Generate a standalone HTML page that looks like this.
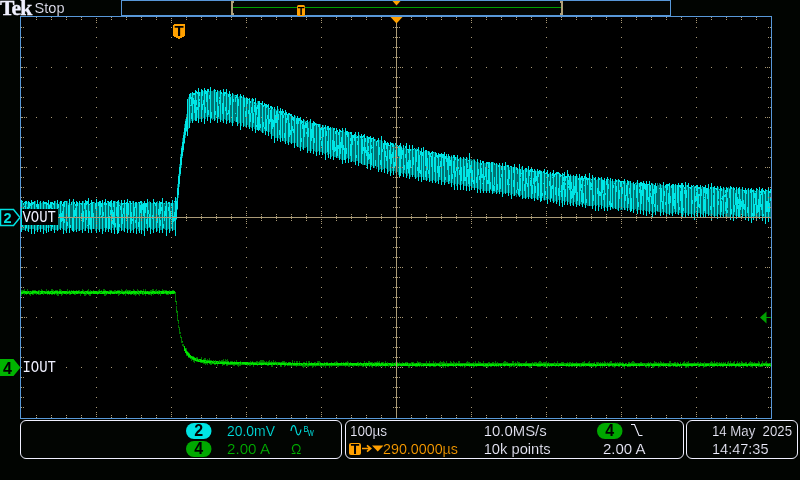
<!DOCTYPE html>
<html><head><meta charset="utf-8"><title>Tek</title>
<style>
html,body{margin:0;padding:0;background:#010401;width:800px;height:480px;overflow:hidden}
svg{display:block;position:absolute;left:0;top:0;will-change:transform}
text{font-family:"Liberation Sans",sans-serif;font-size:15.500px;fill:#f0f0ff}
.t{stroke:#020502;stroke-width:0.2px}
.m{font-family:"Liberation Mono",monospace}
</style></head><body>
<svg width="800" height="480" viewBox="0 0 800 480">
<rect x="0" y="0" width="800" height="480" fill="#010401"/>
<rect x="21" y="17" width="750" height="401" fill="#000"/>
<g shape-rendering="crispEdges" fill="none" stroke-width="1">
<path stroke="#007474" d="M21.5 202V228M22.5 201V230M23.5 203V230M24.5 202V230M25.5 202V230M26.5 201V229M27.5 202V231M28.5 203V230M29.5 202V229M30.5 203V229M31.5 202V229M32.5 202V229M33.5 202V229M34.5 201V229M35.5 201V231M36.5 204V230M37.5 202V228M38.5 204V230M39.5 202V229M40.5 202V229M41.5 203V229M42.5 202V229M43.5 203V229M44.5 202V230M45.5 202V231M46.5 204V230M47.5 203V228M48.5 201V231M49.5 204V228M50.5 202V231M51.5 204V229M52.5 202V229M53.5 203V230M54.5 203V230M55.5 201V230M56.5 203V230M57.5 202V230M58.5 204V230M59.5 202V229M60.5 202V228M61.5 201V228M62.5 204V229M63.5 202V228M64.5 201V230M65.5 201V231M66.5 203V229M67.5 201V229M68.5 203V228M69.5 202V229M70.5 204V228M71.5 202V230M72.5 201V229M73.5 201V230M74.5 202V231M75.5 204V230M76.5 203V229M77.5 202V229M78.5 203V231M79.5 203V228M80.5 203V230M81.5 203V230M82.5 202V229M83.5 201V229M84.5 203V231M85.5 202V230M86.5 201V228M87.5 201V229M88.5 202V228M89.5 204V229M90.5 203V230M91.5 203V229M92.5 202V229M93.5 202V229M94.5 202V229M95.5 203V231M96.5 201V231M97.5 202V229M98.5 202V230M99.5 201V231M100.5 201V229M101.5 203V229M102.5 201V231M103.5 203V231M104.5 202V228M105.5 201V228M106.5 203V230M107.5 201V229M108.5 201V229M109.5 202V229M110.5 201V230M111.5 202V230M112.5 203V228M113.5 201V230M114.5 202V230M115.5 201V228M116.5 202V230M117.5 201V231M118.5 202V228M119.5 202V231M120.5 203V228M121.5 204V228M122.5 203V230M123.5 203V231M124.5 203V230M125.5 203V228M126.5 202V229M127.5 202V229M128.5 203V230M129.5 201V229M130.5 202V229M131.5 203V231M132.5 201V230M133.5 201V229M134.5 203V229M135.5 202V228M136.5 202V229M137.5 203V229M138.5 202V231M139.5 202V229M140.5 201V230M141.5 203V231M142.5 202V230M143.5 203V231M144.5 202V228M145.5 203V228M146.5 203V229M147.5 202V229M148.5 202V228M149.5 201V228M150.5 203V228M151.5 203V229M152.5 203V230M153.5 201V231M154.5 202V229M155.5 203V228M156.5 203V228M157.5 201V231M158.5 203V228M159.5 203V229M160.5 202V230M161.5 202V230M162.5 201V231M163.5 203V229M164.5 203V229M165.5 201V230M166.5 203V231M167.5 203V230M168.5 202V229M169.5 204V229M170.5 203V231M171.5 203V229M172.5 203V230M173.5 203V230M174.5 201V230M175.5 200V228M176.5 198V220M177.5 184V210M178.5 174V198M179.5 164V187M180.5 154V176M181.5 146V168M182.5 138V158M183.5 132V152M184.5 124V144M185.5 119V138M186.5 114V132M187.5 102V132M188.5 97V129M189.5 98V126M190.5 93V123M191.5 93V121M192.5 93V121M193.5 93V121M194.5 93V120M195.5 91V119M196.5 91V119M197.5 92V118M198.5 92V118M199.5 92V119M200.5 92V119M201.5 92V119M202.5 90V119M203.5 91V118M204.5 91V119M205.5 90V119M206.5 91V117M207.5 91V118M208.5 89V117M209.5 91V117M210.5 92V118M211.5 91V119M212.5 91V120M213.5 90V119M214.5 92V118M215.5 90V120M216.5 92V118M217.5 92V120M218.5 91V119M219.5 91V119M220.5 91V118M221.5 92V120M222.5 93V121M223.5 93V119M224.5 92V119M225.5 92V120M226.5 93V120M227.5 93V121M228.5 94V120M229.5 95V123M230.5 94V122M231.5 96V123M232.5 94V122M233.5 94V123M234.5 95V121M235.5 95V122M236.5 95V122M237.5 95V124M238.5 97V124M239.5 96V123M240.5 98V125M241.5 96V126M242.5 97V123M243.5 99V126M244.5 97V126M245.5 98V127M246.5 99V125M247.5 98V125M248.5 99V127M249.5 98V128M250.5 101V127M251.5 99V128M252.5 100V128M253.5 99V127M254.5 102V129M255.5 100V127M256.5 103V130M257.5 101V130M258.5 103V128M259.5 101V129M260.5 103V131M261.5 103V132M262.5 104V130M263.5 105V133M264.5 103V131M265.5 104V131M266.5 104V131M267.5 105V132M268.5 105V133M269.5 108V132M270.5 106V134M271.5 106V133M272.5 107V136M273.5 109V136M274.5 107V137M275.5 109V138M276.5 110V138M277.5 108V138M278.5 109V138M279.5 111V139M280.5 109V137M281.5 111V138M282.5 113V138M283.5 111V141M284.5 113V142M285.5 114V140M286.5 112V141M287.5 114V143M288.5 115V142M289.5 113V142M290.5 114V143M291.5 116V143M292.5 116V143M293.5 117V143M294.5 116V146M295.5 116V143M296.5 118V146M297.5 117V145M298.5 118V147M299.5 118V148M300.5 118V148M301.5 120V147M302.5 121V149M303.5 120V147M304.5 120V148M305.5 121V148M306.5 121V147M307.5 122V150M308.5 122V151M309.5 121V151M310.5 121V149M311.5 123V151M312.5 123V149M313.5 124V152M314.5 122V151M315.5 123V152M316.5 123V151M317.5 124V152M318.5 124V151M319.5 126V152M320.5 124V152M321.5 127V152M322.5 127V153M323.5 125V153M324.5 127V154M325.5 126V156M326.5 127V153M327.5 126V155M328.5 126V156M329.5 128V154M330.5 127V156M331.5 128V157M332.5 127V156M333.5 128V158M334.5 128V157M335.5 131V157M336.5 131V156M337.5 130V158M338.5 132V158M339.5 130V159M340.5 130V159M341.5 131V160M342.5 130V159M343.5 130V160M344.5 132V158M345.5 131V160M346.5 131V159M347.5 131V158M348.5 132V161M349.5 132V159M350.5 132V162M351.5 132V162M352.5 135V161M353.5 135V162M354.5 134V162M355.5 134V161M356.5 135V161M357.5 136V161M358.5 135V163M359.5 135V163M360.5 136V163M361.5 137V162M362.5 136V165M363.5 135V165M364.5 136V164M365.5 138V165M366.5 136V166M367.5 139V165M368.5 137V164M369.5 137V164M370.5 137V165M371.5 138V167M372.5 138V166M373.5 139V166M374.5 139V168M375.5 139V166M376.5 141V169M377.5 140V167M378.5 140V169M379.5 140V170M380.5 140V169M381.5 140V168M382.5 141V170M383.5 143V169M384.5 143V170M385.5 141V168M386.5 143V169M387.5 144V171M388.5 143V172M389.5 145V171M390.5 145V172M391.5 143V173M392.5 143V171M393.5 143V172M394.5 145V171M395.5 143V173M396.5 145V172M397.5 145V172M398.5 146V175M399.5 147V173M400.5 145V172M401.5 146V173M402.5 148V174M403.5 148V173M404.5 148V173M405.5 146V174M406.5 147V176M407.5 149V176M408.5 149V174M409.5 147V176M410.5 149V177M411.5 149V175M412.5 147V175M413.5 149V175M414.5 148V177M415.5 151V175M416.5 148V178M417.5 149V177M418.5 151V178M419.5 150V177M420.5 151V177M421.5 149V179M422.5 152V177M423.5 152V179M424.5 151V180M425.5 150V180M426.5 151V179M427.5 151V180M428.5 151V178M429.5 151V179M430.5 153V181M431.5 152V181M432.5 152V179M433.5 152V180M434.5 152V181M435.5 152V180M436.5 153V182M437.5 155V181M438.5 153V182M439.5 154V180M440.5 154V180M441.5 153V181M442.5 154V182M443.5 154V182M444.5 155V182M445.5 156V183M446.5 154V182M447.5 156V182M448.5 156V182M449.5 156V184M450.5 157V183M451.5 155V184M452.5 157V183M453.5 155V185M454.5 156V183M455.5 157V184M456.5 157V186M457.5 156V184M458.5 159V184M459.5 158V185M460.5 158V186M461.5 158V185M462.5 159V184M463.5 157V185M464.5 158V186M465.5 159V186M466.5 159V187M467.5 158V186M468.5 160V187M469.5 159V188M470.5 159V186M471.5 159V187M472.5 160V188M473.5 159V188M474.5 159V189M475.5 161V188M476.5 162V188M477.5 162V188M478.5 162V189M479.5 163V190M480.5 162V190M481.5 163V189M482.5 161V191M483.5 162V189M484.5 163V191M485.5 163V191M486.5 163V191M487.5 162V191M488.5 162V191M489.5 162V192M490.5 163V190M491.5 162V191M492.5 164V190M493.5 162V193M494.5 163V193M495.5 164V192M496.5 165V191M497.5 164V193M498.5 165V192M499.5 165V193M500.5 165V192M501.5 166V192M502.5 166V192M503.5 166V194M504.5 166V193M505.5 165V192M506.5 165V193M507.5 165V193M508.5 167V194M509.5 167V193M510.5 166V195M511.5 167V194M512.5 167V194M513.5 167V196M514.5 167V193M515.5 167V195M516.5 167V197M517.5 168V194M518.5 169V196M519.5 169V194M520.5 169V196M521.5 167V195M522.5 168V197M523.5 170V198M524.5 169V198M525.5 170V195M526.5 168V198M527.5 169V197M528.5 171V197M529.5 170V197M530.5 169V198M531.5 168V198M532.5 169V199M533.5 171V198M534.5 171V199M535.5 170V198M536.5 171V199M537.5 170V198M538.5 171V200M539.5 170V198M540.5 170V197M541.5 171V200M542.5 172V198M543.5 171V200M544.5 171V201M545.5 173V200M546.5 172V200M547.5 171V201M548.5 174V199M549.5 173V200M550.5 172V199M551.5 174V199M552.5 173V201M553.5 172V199M554.5 174V202M555.5 173V201M556.5 174V201M557.5 172V202M558.5 172V200M559.5 173V202M560.5 174V200M561.5 175V203M562.5 173V202M563.5 174V201M564.5 173V202M565.5 176V202M566.5 176V201M567.5 174V204M568.5 174V202M569.5 176V204M570.5 174V202M571.5 176V203M572.5 176V205M573.5 176V202M574.5 176V202M575.5 176V204M576.5 177V202M577.5 176V205M578.5 178V205M579.5 178V205M580.5 177V204M581.5 176V205M582.5 177V205M583.5 178V204M584.5 176V205M585.5 178V204M586.5 177V205M587.5 178V206M588.5 178V206M589.5 176V205M590.5 178V206M591.5 179V206M592.5 178V205M593.5 177V206M594.5 178V205M595.5 178V204M596.5 180V206M597.5 179V205M598.5 179V206M599.5 178V207M600.5 178V205M601.5 180V206M602.5 179V206M603.5 180V208M604.5 179V208M605.5 181V207M606.5 179V208M607.5 179V208M608.5 179V207M609.5 180V207M610.5 181V208M611.5 181V207M612.5 180V209M613.5 181V209M614.5 181V208M615.5 181V207M616.5 180V209M617.5 180V210M618.5 182V210M619.5 180V208M620.5 181V210M621.5 183V210M622.5 181V210M623.5 181V208M624.5 182V209M625.5 181V210M626.5 183V208M627.5 182V211M628.5 181V208M629.5 181V210M630.5 182V210M631.5 183V209M632.5 183V209M633.5 184V209M634.5 184V210M635.5 183V209M636.5 182V211M637.5 183V209M638.5 183V210M639.5 183V210M640.5 182V210M641.5 182V210M642.5 183V211M643.5 185V210M644.5 183V210M645.5 184V211M646.5 185V210M647.5 184V211M648.5 184V212M649.5 185V212M650.5 185V211M651.5 183V212M652.5 183V211M653.5 184V213M654.5 185V212M655.5 185V210M656.5 186V211M657.5 183V212M658.5 185V212M659.5 183V212M660.5 184V213M661.5 185V213M662.5 185V212M663.5 185V211M664.5 186V212M665.5 185V213M666.5 185V214M667.5 184V214M668.5 184V214M669.5 186V213M670.5 186V213M671.5 185V214M672.5 185V213M673.5 184V213M674.5 185V212M675.5 186V214M676.5 185V212M677.5 185V214M678.5 187V213M679.5 185V213M680.5 185V213M681.5 187V214M682.5 187V214M683.5 185V215M684.5 187V213M685.5 185V212M686.5 185V213M687.5 185V215M688.5 188V212M689.5 187V214M690.5 187V214M691.5 187V213M692.5 186V214M693.5 185V215M694.5 186V214M695.5 186V213M696.5 185V215M697.5 187V214M698.5 187V213M699.5 187V213M700.5 186V214M701.5 187V214M702.5 186V215M703.5 188V214M704.5 187V213M705.5 186V216M706.5 188V214M707.5 188V214M708.5 186V214M709.5 189V215M710.5 187V216M711.5 186V213M712.5 187V215M713.5 187V216M714.5 187V216M715.5 188V216M716.5 188V216M717.5 189V216M718.5 187V214M719.5 189V215M720.5 188V214M721.5 188V215M722.5 189V216M723.5 187V217M724.5 188V214M725.5 190V217M726.5 188V214M727.5 188V217M728.5 187V217M729.5 188V217M730.5 190V216M731.5 187V215M732.5 188V217M733.5 189V215M734.5 188V215M735.5 190V216M736.5 189V216M737.5 189V216M738.5 188V216M739.5 190V217M740.5 189V217M741.5 189V215M742.5 189V218M743.5 190V216M744.5 190V216M745.5 189V215M746.5 190V217M747.5 189V216M748.5 190V217M749.5 190V217M750.5 189V217M751.5 189V219M752.5 190V218M753.5 189V217M754.5 190V218M755.5 191V217M756.5 190V217M757.5 189V218M758.5 190V217M759.5 190V216M760.5 191V216M761.5 189V216M762.5 191V216M763.5 190V217M764.5 191V218M765.5 189V216M766.5 190V217M767.5 190V217M768.5 189V218M769.5 191V217M770.5 189V219"/>
<path stroke="#00e6e6" d="M21.5 200V232M22.5 224V227M22.5 201V202M22.5 218V219M23.5 203V205M23.5 216V225M23.5 207V209M24.5 202V203M24.5 206V207M25.5 201V231M26.5 222V228M26.5 201V204M27.5 207V211M27.5 210V218M28.5 201V232M29.5 202V208M29.5 214V223M30.5 203V206M31.5 200V234M32.5 217V222M32.5 202V205M33.5 202V204M33.5 213V220M34.5 201V234M36.5 215V220M36.5 204V207M36.5 206V207M37.5 200V232M38.5 212V216M38.5 204V210M38.5 208V217M38.5 224V226M40.5 201V232M41.5 209V214M42.5 220V225M43.5 201V234M44.5 202V204M45.5 202V204M45.5 210V219M46.5 202V233M47.5 203V205M48.5 200V232M49.5 205V210M50.5 223V226M50.5 202V208M51.5 202V231M52.5 208V213M52.5 202V204M52.5 214V227M53.5 203V205M53.5 215V216M54.5 201V233M55.5 211V216M55.5 209V210M57.5 200V231M58.5 204V208M59.5 214V218M60.5 201V230M61.5 201V204M61.5 213V222M62.5 211V216M62.5 204V206M62.5 211V221M62.5 212V214M63.5 202V234M64.5 219V223M64.5 201V207M65.5 201V202M66.5 201V233M67.5 222V226M68.5 205V218M69.5 199V233M70.5 225V228M71.5 202V205M72.5 218V231M73.5 199V232M74.5 202V204M74.5 210V218M75.5 204V206M75.5 208V216M76.5 201V232M77.5 202V206M79.5 201V231M80.5 203V204M81.5 213V218M81.5 203V205M82.5 201V233M83.5 211V222M84.5 203V209M85.5 200V231M86.5 201V205M86.5 210V220M87.5 201V204M87.5 225V226M88.5 198V233M89.5 204V205M89.5 211V224M89.5 223V225M90.5 203V204M90.5 218V229M91.5 200V233M92.5 205V211M92.5 202V208M92.5 208V218M93.5 224V228M93.5 202V203M93.5 213V224M93.5 227V229M95.5 203V209M96.5 199V233M98.5 202V206M99.5 201V232M100.5 210V213M100.5 201V205M100.5 203V215M101.5 203V207M101.5 216V217M102.5 200V234M103.5 212V216M104.5 202V205M105.5 199V232M106.5 203V205M106.5 217V228M107.5 201V202M108.5 201V232M109.5 216V222M109.5 202V206M109.5 218V229M110.5 210V215M110.5 201V207M111.5 200V233M112.5 220V224M112.5 210V219M113.5 201V207M113.5 212V225M113.5 205V206M114.5 201V234M115.5 223V227M116.5 202V203M116.5 207V216M117.5 201V234M118.5 200V233M119.5 224V227M119.5 205V206M120.5 206V210M121.5 200V231M122.5 203V205M122.5 214V224M123.5 208V214M123.5 203V204M124.5 200V232M125.5 203V204M126.5 211V216M126.5 202V206M126.5 204V214M127.5 199V233M128.5 203V207M128.5 207V215M129.5 201V202M130.5 201V233M131.5 212V218M131.5 203V204M131.5 212V224M132.5 219V221M133.5 201V233M134.5 211V214M134.5 207V216M135.5 220V223M135.5 202V208M136.5 202V234M138.5 222V227M138.5 202V203M139.5 202V233M140.5 205V209M140.5 201V203M140.5 205V213M141.5 201V234M142.5 204V210M143.5 203V206M143.5 206V216M144.5 201V236M145.5 207V213M145.5 203V207M146.5 221V224M146.5 203V207M146.5 219V221M147.5 199V231M148.5 210V214M149.5 217V223M149.5 214V227M150.5 202V234M152.5 215V219M153.5 199V233M154.5 202V204M155.5 203V206M156.5 202V232M157.5 218V223M158.5 209V215M159.5 201V233M160.5 220V226M160.5 202V208M160.5 203V214M161.5 207V211M161.5 202V204M162.5 198V233M163.5 224V228M164.5 203V204M164.5 211V221M165.5 206V216M166.5 201V236M168.5 207V211M168.5 202V204M169.5 202V233M170.5 211V219M171.5 203V206M172.5 200V231M173.5 216V222M174.5 201V202M174.5 212V221M175.5 197V236M176.5 201V219M177.5 188V209M178.5 176V195M179.5 167V184M180.5 157V174M181.5 148V165M182.5 142V156M183.5 135V150M184.5 128V143M185.5 121V135M186.5 117V131M187.5 99V136M189.5 94V128M190.5 93V99M190.5 105V106M191.5 113V119M191.5 97V106M192.5 92V123M193.5 98V104M193.5 93V95M194.5 93V95M194.5 100V113M195.5 90V121M196.5 100V105M196.5 91V93M196.5 107V121M197.5 107V110M197.5 92V94M198.5 88V123M199.5 102V107M199.5 92V96M199.5 99V101M201.5 89V122M202.5 104V110M202.5 90V96M203.5 100V105M204.5 88V124M205.5 107V113M205.5 90V94M206.5 97V102M206.5 91V97M207.5 89V121M208.5 110V115M208.5 89V92M209.5 95V99M210.5 87V123M211.5 112V118M214.5 89V121M215.5 111V115M215.5 90V91M216.5 92V93M216.5 93V102M217.5 90V123M218.5 106V117M219.5 100V104M219.5 97V99M220.5 90V122M221.5 92V94M222.5 103V108M222.5 103V114M222.5 109V111M223.5 89V123M224.5 92V96M225.5 107V111M225.5 92V94M226.5 89V124M227.5 113V115M228.5 110V114M228.5 94V97M229.5 91V123M230.5 94V96M230.5 97V105M232.5 93V126M233.5 99V102M235.5 97V102M235.5 95V96M235.5 113V114M236.5 117V122M236.5 95V98M237.5 94V126M238.5 100V106M238.5 99V100M240.5 94V130M241.5 96V98M243.5 95V127M244.5 98V107M245.5 111V117M246.5 98V127M247.5 98V104M248.5 110V114M248.5 99V100M249.5 98V129M250.5 101V103M250.5 113V122M251.5 107V113M252.5 98V131M253.5 99V101M253.5 113V123M254.5 105V112M254.5 102V104M255.5 98V133M256.5 107V115M256.5 125V127M257.5 105V109M257.5 117V130M257.5 117V118M258.5 101V131M259.5 101V130M260.5 124V128M260.5 103V104M261.5 103V105M262.5 101V133M263.5 122V127M263.5 105V107M264.5 103V106M264.5 127V129M265.5 104V135M266.5 121V125M266.5 104V108M266.5 119V131M267.5 115V119M267.5 105V107M268.5 104V136M269.5 119V124M269.5 108V109M270.5 119V122M270.5 106V108M270.5 110V121M271.5 106V139M272.5 107V109M272.5 119V129M273.5 122V127M273.5 120V122M274.5 107V143M275.5 115V123M276.5 111V123M277.5 106V141M278.5 114V120M279.5 130V135M279.5 111V113M280.5 108V142M281.5 111V115M282.5 109V141M283.5 115V118M283.5 111V113M284.5 133V138M284.5 113V115M285.5 110V144M286.5 118V123M286.5 112V115M287.5 114V120M288.5 113V145M289.5 123V126M289.5 113V115M289.5 124V137M290.5 130V135M290.5 114V116M291.5 114V144M292.5 126V131M292.5 116V120M293.5 129V133M293.5 117V121M294.5 115V148M296.5 118V124M297.5 116V147M298.5 118V124M299.5 118V121M300.5 117V151M301.5 138V142M301.5 120V124M302.5 124V129M302.5 121V123M303.5 119V150M304.5 125V137M305.5 122V128M306.5 123V128M306.5 121V122M306.5 132V134M307.5 120V153M308.5 128V137M308.5 131V132M310.5 119V153M311.5 129V141M312.5 123V129M312.5 126V138M313.5 121V154M314.5 138V143M314.5 122V126M315.5 123V125M316.5 124V156M317.5 124V125M318.5 124V127M319.5 124V155M320.5 134V140M320.5 128V137M321.5 141V146M321.5 127V130M322.5 125V155M323.5 133V137M323.5 128V137M324.5 127V129M325.5 125V160M326.5 131V136M327.5 126V130M327.5 141V152M328.5 126V158M329.5 128V130M330.5 127V159M332.5 140V150M333.5 128V160M334.5 128V130M334.5 141V152M335.5 147V151M335.5 131V134M336.5 128V158M337.5 130V132M337.5 145V156M337.5 148V150M338.5 145V149M338.5 132V135M339.5 129V160M340.5 130V132M340.5 142V154M341.5 142V148M341.5 131V132M341.5 137V145M342.5 128V164M343.5 145V150M344.5 148V160M345.5 128V163M346.5 148V154M346.5 131V135M347.5 131V137M348.5 132V163M350.5 138V141M350.5 132V134M350.5 144V156M351.5 132V162M352.5 135V137M352.5 135V145M353.5 135V138M354.5 137V141M354.5 134V140M354.5 137V139M355.5 132V165M356.5 155V158M356.5 137V138M357.5 141V145M357.5 136V138M358.5 132V166M360.5 136V138M361.5 134V164M362.5 150V154M362.5 136V138M362.5 139V152M363.5 147V151M363.5 135V137M364.5 134V165M365.5 147V153M365.5 138V142M366.5 150V156M367.5 136V169M368.5 146V151M368.5 137V143M368.5 152V160M369.5 154V159M369.5 137V139M370.5 136V170M371.5 145V149M371.5 138V142M371.5 153V165M372.5 138V139M372.5 147V148M373.5 137V168M374.5 139V141M375.5 160V166M376.5 141V146M376.5 141V145M377.5 140V142M378.5 138V172M379.5 147V155M380.5 160V165M381.5 136V172M382.5 149V152M383.5 143V149M384.5 140V173M385.5 151V157M385.5 141V145M386.5 156V161M386.5 143V149M387.5 142V174M388.5 143V146M389.5 145V146M389.5 150V159M390.5 142V176M391.5 158V164M391.5 143V145M391.5 154V162M392.5 152V158M392.5 143V147M393.5 144V175M394.5 162V167M395.5 150V155M395.5 143V145M395.5 154V166M396.5 143V173M397.5 145V146M398.5 148V153M398.5 146V148M398.5 146V156M399.5 145V177M400.5 143V176M401.5 147V159M402.5 150V155M403.5 145V177M404.5 165V170M405.5 154V158M405.5 146V148M406.5 143V178M407.5 162V169M407.5 149V150M408.5 149V153M408.5 160V173M409.5 145V179M410.5 149V151M410.5 160V168M412.5 145V177M413.5 149V150M413.5 157V165M414.5 148V149M415.5 149V179M416.5 158V161M416.5 150V162M417.5 167V171M417.5 149V151M418.5 147V181M419.5 155V160M419.5 160V173M420.5 170V174M420.5 151V155M421.5 148V182M422.5 152V156M423.5 147V180M425.5 171V177M425.5 150V154M425.5 154V166M426.5 150V181M427.5 158V170M428.5 170V174M428.5 151V155M429.5 152V182M430.5 153V157M431.5 152V154M431.5 156V167M432.5 151V183M433.5 152V153M434.5 165V171M434.5 157V169M434.5 170V172M435.5 152V183M436.5 153V157M437.5 155V158M437.5 166V173M438.5 153V184M439.5 154V157M439.5 166V177M439.5 172V174M440.5 161V167M440.5 154V157M441.5 153V185M442.5 154V158M443.5 160V164M443.5 154V156M443.5 156V166M444.5 152V185M445.5 177V180M445.5 156V159M446.5 157V162M446.5 154V158M447.5 158V162M447.5 158V170M448.5 154V184M449.5 175V181M449.5 156V162M449.5 158V166M450.5 160V166M451.5 156V187M452.5 174V179M453.5 163V169M453.5 155V158M453.5 161V173M454.5 155V190M455.5 171V177M455.5 157V160M456.5 168V171M457.5 155V190M458.5 159V161M458.5 167V169M459.5 170V175M460.5 157V190M461.5 167V173M461.5 170V181M463.5 157V190M464.5 166V169M464.5 168V181M465.5 177V181M465.5 159V160M466.5 157V191M467.5 163V168M467.5 169V177M468.5 181V184M468.5 160V161M468.5 169V181M469.5 153V191M470.5 165V173M471.5 161V190M472.5 170V182M473.5 180V184M474.5 160V190M476.5 177V183M477.5 159V193M478.5 169V175M479.5 176V180M480.5 160V193M481.5 173V178M481.5 163V165M481.5 168V178M481.5 172V174M482.5 174V178M482.5 161V163M482.5 183V184M483.5 161V193M484.5 176V180M485.5 172V176M485.5 167V177M486.5 162V193M487.5 180V184M487.5 162V164M488.5 169V174M488.5 162V168M488.5 174V184M489.5 162V193M490.5 182V187M490.5 187V189M491.5 167V172M491.5 162V168M492.5 162V194M493.5 185V191M494.5 186V191M494.5 163V165M494.5 177V185M496.5 163V194M497.5 184V188M497.5 188V190M498.5 165V167M499.5 163V194M500.5 181V186M500.5 178V189M501.5 174V177M501.5 166V170M502.5 163V197M504.5 166V170M505.5 162V194M507.5 179V185M507.5 165V167M508.5 165V196M509.5 170V179M509.5 184V185M510.5 166V167M511.5 166V199M513.5 167V173M513.5 180V187M514.5 164V196M516.5 190V193M516.5 167V170M517.5 169V174M517.5 168V170M517.5 182V190M518.5 189V195M519.5 164V197M520.5 172V177M520.5 169V175M520.5 178V191M521.5 173V174M522.5 166V199M523.5 175V181M523.5 170V173M523.5 173V180M524.5 184V191M525.5 168V199M526.5 178V184M526.5 168V172M526.5 179V181M527.5 183V187M527.5 185V186M528.5 166V199M529.5 170V176M530.5 180V186M530.5 169V172M530.5 178V179M531.5 168V199M532.5 185V189M532.5 169V172M532.5 185V194M533.5 178V184M533.5 171V172M534.5 169V201M535.5 187V193M535.5 171V182M535.5 186V187M536.5 176V181M537.5 169V200M538.5 191V196M538.5 171V177M538.5 183V195M539.5 170V174M540.5 171V202M541.5 171V201M542.5 193V196M542.5 195V196M543.5 171V173M543.5 183V184M544.5 169V200M545.5 191V195M545.5 173V174M546.5 172V174M547.5 170V204M548.5 174V177M549.5 181V186M550.5 172V202M551.5 186V190M551.5 187V198M552.5 185V189M552.5 173V176M552.5 177V178M553.5 170V203M554.5 174V177M555.5 173V175M555.5 187V195M556.5 172V204M557.5 172V174M558.5 172V174M558.5 188V196M559.5 173V206M560.5 174V177M560.5 191V192M561.5 175V176M561.5 185V197M562.5 173V207M563.5 177V181M563.5 174V175M563.5 182V190M564.5 172V205M565.5 178V181M565.5 176V180M565.5 189V197M565.5 183V185M566.5 176V178M567.5 170V205M568.5 180V185M568.5 174V177M568.5 186V188M569.5 176V182M569.5 179V190M570.5 175V206M571.5 182V189M571.5 191V199M572.5 189V198M573.5 175V206M574.5 186V191M574.5 186V195M575.5 189V193M575.5 176V179M575.5 178V189M576.5 174V207M577.5 192V201M577.5 200V201M578.5 178V180M579.5 174V206M580.5 178V191M581.5 184V188M581.5 176V180M581.5 190V202M581.5 195V196M582.5 176V207M583.5 178V181M583.5 193V203M584.5 176V179M584.5 185V186M585.5 174V208M586.5 199V203M586.5 177V180M587.5 179V185M587.5 178V184M588.5 178V180M589.5 173V206M590.5 182V190M591.5 183V187M591.5 179V180M591.5 188V190M592.5 175V209M593.5 195V201M594.5 178V180M595.5 177V211M597.5 188V194M598.5 177V211M599.5 191V196M599.5 178V180M600.5 192V196M601.5 177V209M602.5 189V193M602.5 180V189M603.5 194V200M603.5 180V181M603.5 181V190M604.5 178V211M605.5 193V195M606.5 179V185M607.5 177V211M608.5 184V189M608.5 179V180M609.5 201V205M610.5 178V210M611.5 203V207M612.5 179V208M613.5 185V188M614.5 183V184M615.5 179V209M616.5 186V192M616.5 180V182M618.5 179V211M619.5 190V194M619.5 180V182M619.5 190V199M620.5 181V187M621.5 181V209M622.5 181V182M622.5 187V194M623.5 181V184M624.5 179V210M625.5 195V201M626.5 191V195M626.5 185V196M627.5 180V211M628.5 198V204M628.5 181V185M629.5 188V194M630.5 181V212M631.5 201V206M631.5 198V211M633.5 182V213M634.5 184V190M634.5 188V190M635.5 183V184M636.5 185V190M636.5 186V198M637.5 180V214M638.5 202V207M639.5 189V193M639.5 183V187M640.5 182V214M641.5 200V204M641.5 182V186M641.5 190V202M642.5 192V196M642.5 183V187M642.5 186V194M643.5 181V215M644.5 183V189M645.5 184V190M646.5 181V216M647.5 194V200M647.5 184V186M647.5 186V199M648.5 197V202M648.5 184V185M649.5 181V214M650.5 193V197M650.5 185V191M651.5 183V185M651.5 196V204M652.5 184V218M653.5 189V195M653.5 192V204M654.5 204V207M654.5 185V186M654.5 186V194M655.5 183V215M656.5 187V193M656.5 186V188M657.5 205V211M659.5 188V189M660.5 184V216M661.5 188V194M661.5 191V202M662.5 203V209M662.5 201V209M663.5 182V215M664.5 191V196M665.5 202V205M665.5 185V188M666.5 184V216M667.5 184V190M668.5 199V203M668.5 184V186M668.5 193V204M669.5 183V215M670.5 196V203M671.5 185V188M672.5 184V216M673.5 199V206M673.5 184V188M673.5 188V200M673.5 192V194M674.5 193V199M674.5 200V209M675.5 184V214M677.5 185V191M677.5 191V203M678.5 183V215M679.5 207V210M679.5 185V187M680.5 185V188M680.5 191V201M681.5 183V218M682.5 183V217M683.5 208V211M683.5 185V187M684.5 190V194M684.5 187V189M685.5 182V218M686.5 190V198M687.5 185V187M688.5 183V216M689.5 187V188M690.5 187V189M691.5 185V217M692.5 200V204M692.5 186V187M693.5 185V186M694.5 187V220M695.5 196V202M695.5 186V188M696.5 185V191M696.5 192V201M697.5 185V217M698.5 194V199M698.5 187V189M698.5 195V207M699.5 204V208M699.5 187V189M699.5 194V196M700.5 185V217M701.5 193V196M701.5 189V196M702.5 186V187M703.5 187V217M704.5 187V193M704.5 199V211M704.5 197V198M705.5 185V218M706.5 190V194M706.5 188V192M707.5 188V191M707.5 191V199M708.5 184V216M710.5 206V210M710.5 187V189M711.5 183V221M713.5 204V207M713.5 187V193M713.5 195V204M714.5 186V217M715.5 188V189M716.5 188V190M717.5 186V219M718.5 201V205M718.5 191V199M719.5 189V190M720.5 186V217M721.5 204V209M721.5 188V191M721.5 201V212M721.5 198V199M722.5 196V200M723.5 187V218M724.5 195V197M725.5 194V197M725.5 190V193M725.5 202V211M726.5 187V217M727.5 210V213M727.5 188V192M727.5 198V208M729.5 190V195M729.5 189V198M730.5 186V220M731.5 209V214M731.5 187V189M733.5 187V221M734.5 205V212M734.5 188V190M735.5 195V201M735.5 193V205M736.5 187V219M737.5 203V209M737.5 197V206M738.5 199V204M738.5 188V194M738.5 205V217M739.5 187V218M740.5 202V205M740.5 199V210M741.5 201V207M741.5 206V207M742.5 187V218M743.5 200V203M743.5 190V191M743.5 201V209M744.5 204V210M744.5 190V193M745.5 188V220M746.5 190V194M747.5 207V213M748.5 188V221M750.5 189V193M751.5 188V223M752.5 213V216M752.5 190V192M753.5 190V220M754.5 193V198M754.5 204V216M755.5 191V192M755.5 193V205M756.5 188V221M757.5 189V190M757.5 205V213M757.5 210V211M758.5 207V212M758.5 199V210M759.5 187V219M760.5 191V193M760.5 194V207M761.5 204V210M761.5 189V195M762.5 188V221M763.5 190V192M763.5 214V216M764.5 191V194M765.5 189V224M766.5 190V191M766.5 201V212M767.5 201V212M768.5 188V222M769.5 207V212M769.5 191V193M769.5 203V210M770.5 197V201M770.5 189V193"/>
<path stroke="#007000" d="M21.5 290V291M21.5 294V296M22.5 290V291M23.5 290V291M24.5 289V291M24.5 294V295M26.5 294V295M27.5 289V291M29.5 294V295M30.5 294V296M32.5 290V291M32.5 294V295M33.5 290V291M33.5 294V295M34.5 290V291M35.5 290V291M36.5 294V295M38.5 290V291M38.5 294V295M39.5 290V291M39.5 294V295M40.5 294V295M41.5 289V291M42.5 290V291M43.5 294V295M46.5 289V291M47.5 294V295M48.5 290V291M49.5 294V295M51.5 289V291M51.5 294V295M52.5 289V291M52.5 294V295M53.5 290V291M54.5 294V295M55.5 290V291M56.5 290V291M56.5 294V295M57.5 290V291M57.5 294V296M58.5 294V296M59.5 289V291M60.5 289V291M61.5 290V291M61.5 294V296M62.5 294V295M66.5 294V295M67.5 289V291M69.5 290V291M69.5 294V295M70.5 294V295M71.5 290V291M73.5 290V291M74.5 294V295M75.5 294V295M76.5 290V291M78.5 290V291M79.5 290V291M80.5 294V296M82.5 289V291M83.5 290V291M84.5 294V296M85.5 294V296M86.5 294V295M87.5 290V291M88.5 289V291M88.5 294V295M89.5 294V296M90.5 290V291M90.5 294V296M93.5 290V291M97.5 294V295M98.5 290V291M99.5 289V291M101.5 290V291M103.5 289V291M104.5 289V291M104.5 294V296M105.5 290V291M105.5 294V296M106.5 294V295M109.5 290V291M110.5 290V291M110.5 294V295M111.5 290V291M114.5 290V291M115.5 290V291M117.5 290V291M118.5 290V291M118.5 294V296M119.5 290V291M119.5 294V295M121.5 289V291M122.5 290V291M123.5 294V295M125.5 290V291M125.5 294V296M126.5 289V291M127.5 290V291M128.5 290V291M128.5 294V295M129.5 290V291M130.5 290V291M130.5 294V295M131.5 294V295M133.5 289V291M133.5 294V295M134.5 290V291M134.5 294V295M135.5 294V296M136.5 294V295M137.5 289V291M138.5 290V291M138.5 294V295M139.5 294V296M140.5 290V291M141.5 290V291M142.5 294V295M143.5 289V291M143.5 294V295M145.5 289V291M145.5 294V296M148.5 294V295M149.5 294V295M150.5 290V291M150.5 294V295M151.5 290V291M151.5 294V296M152.5 289V291M153.5 289V291M153.5 294V295M155.5 290V291M156.5 289V291M158.5 290V291M158.5 294V295M159.5 290V291M160.5 294V296M162.5 289V291M163.5 290V291M164.5 290V291M165.5 290V291M166.5 290V291M166.5 294V295M167.5 294V295M168.5 294V295M169.5 290V291M170.5 294V295M172.5 290V291M173.5 290V291M175.5 292V295M175.5 295V298M175.5 298V301M175.5 301V302M176.5 301V305M176.5 306V310M176.5 310V313M177.5 311V313M177.5 313V315M177.5 315V319M177.5 319V321M178.5 320V324M178.5 325V328M179.5 327V329M179.5 329V333M179.5 333V334M180.5 332V334M180.5 335V338M181.5 337V339M181.5 339V341M181.5 341V343M182.5 341V343M182.5 344V346M183.5 344V347M186.5 348V350M186.5 355V356M187.5 351V352M188.5 352V353M188.5 357V358M189.5 353V354M191.5 359V361M193.5 356V357M193.5 360V362M194.5 361V363M196.5 357V358M196.5 361V362M197.5 357V358M200.5 362V363M201.5 357V359M203.5 359V360M203.5 363V364M204.5 358V360M204.5 363V364M205.5 358V360M205.5 363V365M206.5 363V364M207.5 359V360M207.5 363V365M209.5 358V360M210.5 360V361M210.5 364V365M211.5 360V361M211.5 364V365M213.5 360V361M214.5 364V365M215.5 360V361M215.5 364V365M217.5 364V366M219.5 360V361M221.5 360V361M222.5 360V361M222.5 364V366M223.5 359V361M225.5 359V361M226.5 360V362M226.5 365V366M227.5 359V361M227.5 365V366M230.5 361V362M231.5 361V362M232.5 361V362M233.5 365V366M234.5 361V362M234.5 365V366M236.5 360V362M237.5 365V366M238.5 365V367M239.5 365V366M240.5 361V362M240.5 365V366M247.5 365V366M249.5 365V366M250.5 361V362M250.5 365V366M252.5 361V362M253.5 365V367M256.5 361V362M257.5 361V362M257.5 365V366M259.5 361V362M260.5 360V362M261.5 360V362M261.5 365V366M262.5 360V362M263.5 360V362M264.5 361V362M266.5 361V362M267.5 365V366M268.5 361V362M268.5 365V366M269.5 360V362M271.5 361V362M271.5 365V367M272.5 365V367M273.5 360V362M275.5 361V362M277.5 365V366M280.5 362V363M280.5 366V367M281.5 365V367M282.5 361V362M283.5 361V362M284.5 361V362M284.5 365V367M285.5 362V363M288.5 365V366M289.5 365V366M290.5 365V366M291.5 366V367M292.5 360V362M292.5 365V366M294.5 361V363M296.5 361V363M296.5 366V367M297.5 361V363M299.5 361V363M302.5 366V367M303.5 362V363M303.5 366V368M304.5 362V363M304.5 366V367M305.5 366V367M306.5 361V363M307.5 366V367M308.5 361V363M308.5 366V367M309.5 361V363M311.5 362V363M312.5 366V368M313.5 366V367M314.5 362V363M315.5 362V363M315.5 366V367M317.5 361V363M318.5 361V363M319.5 361V363M320.5 362V363M320.5 366V367M321.5 366V368M323.5 366V367M324.5 362V363M325.5 366V368M326.5 362V363M327.5 362V363M329.5 366V368M331.5 362V363M331.5 366V367M334.5 362V363M335.5 362V363M336.5 361V363M337.5 362V363M337.5 366V367M338.5 366V367M341.5 362V363M343.5 362V363M345.5 362V363M345.5 366V367M346.5 362V363M347.5 361V363M348.5 362V363M348.5 366V367M349.5 366V367M350.5 362V363M353.5 366V367M357.5 362V363M358.5 362V363M358.5 366V367M360.5 362V363M362.5 366V367M363.5 366V367M364.5 361V363M365.5 366V367M366.5 362V363M366.5 366V367M368.5 361V363M369.5 361V363M369.5 366V367M370.5 362V363M371.5 362V363M371.5 366V367M372.5 362V363M372.5 366V368M374.5 362V363M375.5 362V363M375.5 366V367M376.5 362V363M376.5 366V367M377.5 361V363M378.5 362V363M378.5 366V367M379.5 361V363M380.5 366V367M381.5 362V363M382.5 362V363M382.5 366V367M383.5 362V363M385.5 361V363M385.5 366V368M387.5 362V363M388.5 366V367M390.5 366V368M391.5 366V367M392.5 362V363M395.5 362V363M396.5 362V363M396.5 366V367M397.5 362V363M397.5 366V367M399.5 362V363M401.5 366V367M402.5 362V363M405.5 362V363M406.5 362V363M407.5 362V363M408.5 366V368M409.5 366V368M411.5 362V363M412.5 362V363M412.5 366V367M413.5 362V363M415.5 366V367M416.5 366V367M417.5 361V363M417.5 366V367M418.5 362V363M419.5 362V363M419.5 366V367M420.5 362V363M421.5 366V367M423.5 366V367M426.5 361V363M426.5 366V367M429.5 361V363M429.5 366V367M430.5 366V367M433.5 361V363M433.5 366V367M434.5 366V367M435.5 362V363M435.5 366V367M439.5 362V363M439.5 366V367M440.5 361V363M440.5 366V367M441.5 362V363M442.5 362V363M442.5 366V367M443.5 361V363M443.5 366V368M444.5 362V363M445.5 366V368M446.5 361V363M447.5 366V367M448.5 366V367M450.5 361V363M451.5 362V363M453.5 361V363M453.5 366V367M454.5 362V363M455.5 366V367M456.5 362V363M458.5 361V363M459.5 361V363M460.5 366V367M462.5 366V367M464.5 366V368M465.5 366V367M466.5 362V363M467.5 361V363M468.5 362V363M469.5 362V363M469.5 366V367M471.5 366V367M473.5 362V363M473.5 366V368M474.5 366V367M475.5 361V363M476.5 366V367M478.5 361V363M479.5 362V363M480.5 362V363M483.5 361V363M483.5 366V367M484.5 366V367M485.5 366V367M486.5 366V368M487.5 366V368M488.5 362V363M488.5 366V367M489.5 362V363M490.5 366V367M491.5 366V367M492.5 362V363M493.5 362V363M494.5 366V367M495.5 361V363M496.5 366V367M497.5 362V363M498.5 366V367M500.5 366V367M503.5 362V363M504.5 361V363M504.5 366V367M505.5 361V363M506.5 362V363M507.5 362V363M509.5 366V368M510.5 366V367M511.5 366V367M512.5 361V363M513.5 361V363M513.5 366V367M514.5 366V367M515.5 362V363M517.5 361V363M517.5 366V367M518.5 362V363M519.5 362V363M519.5 366V367M521.5 366V367M525.5 362V363M525.5 366V367M526.5 361V363M528.5 366V367M529.5 366V368M530.5 366V368M531.5 366V367M532.5 362V363M534.5 362V363M535.5 362V363M536.5 362V363M537.5 366V367M538.5 362V363M538.5 366V367M539.5 361V363M539.5 366V367M540.5 361V363M540.5 366V367M541.5 362V363M543.5 362V363M543.5 366V367M544.5 362V363M544.5 366V367M545.5 362V363M545.5 366V367M546.5 361V363M546.5 366V367M547.5 366V368M548.5 362V363M549.5 366V367M551.5 366V367M554.5 362V363M555.5 366V367M557.5 361V363M558.5 366V367M561.5 362V363M562.5 362V363M563.5 362V363M566.5 366V367M567.5 362V363M568.5 366V367M569.5 362V363M569.5 366V367M570.5 362V363M571.5 366V367M572.5 362V363M572.5 366V367M574.5 366V367M576.5 362V363M576.5 366V367M577.5 366V367M579.5 366V367M580.5 366V367M581.5 366V367M582.5 362V363M583.5 362V363M583.5 366V367M584.5 361V363M585.5 366V367M588.5 362V363M589.5 361V363M589.5 366V367M590.5 366V367M591.5 366V368M592.5 366V367M593.5 366V367M594.5 362V363M595.5 367V368M596.5 362V363M596.5 366V367M597.5 362V363M598.5 362V363M600.5 362V363M600.5 366V368M602.5 362V363M602.5 366V368M604.5 361V363M604.5 366V367M605.5 362V363M607.5 362V363M608.5 366V367M609.5 362V363M609.5 366V367M610.5 361V363M611.5 361V363M612.5 366V367M613.5 366V367M614.5 366V368M615.5 362V363M615.5 366V367M617.5 362V363M618.5 366V367M619.5 362V363M619.5 366V367M620.5 362V363M622.5 362V363M622.5 366V367M623.5 366V367M624.5 367V369M628.5 362V363M628.5 366V367M629.5 362V363M629.5 366V367M630.5 366V367M631.5 362V363M632.5 361V363M633.5 361V363M633.5 366V367M634.5 362V363M636.5 366V368M639.5 366V367M640.5 362V363M641.5 362V363M645.5 363V364M646.5 366V368M648.5 362V363M648.5 366V368M649.5 366V367M650.5 362V363M652.5 363V364M652.5 367V368M653.5 366V368M654.5 361V363M654.5 366V367M655.5 362V363M656.5 362V363M658.5 362V363M658.5 366V368M659.5 366V367M660.5 361V363M660.5 366V367M661.5 362V363M663.5 362V363M663.5 366V367M665.5 366V367M668.5 366V367M669.5 361V363M669.5 366V367M670.5 361V363M670.5 366V367M673.5 366V367M674.5 362V363M675.5 362V363M675.5 366V367M676.5 363V364M677.5 362V363M677.5 366V367M680.5 362V363M683.5 362V363M684.5 361V363M685.5 366V368M686.5 362V364M686.5 367V368M687.5 362V363M687.5 366V367M688.5 361V363M688.5 366V368M691.5 366V367M692.5 366V367M694.5 362V363M697.5 362V363M698.5 362V364M699.5 363V364M700.5 362V363M703.5 366V368M704.5 362V364M705.5 366V367M706.5 366V367M709.5 366V367M710.5 362V363M711.5 361V363M712.5 362V363M712.5 366V367M713.5 366V367M714.5 361V363M714.5 366V367M716.5 362V363M717.5 362V363M717.5 366V367M719.5 362V363M720.5 366V367M721.5 362V363M722.5 363V364M723.5 362V363M723.5 366V367M725.5 362V363M726.5 367V368M727.5 362V363M728.5 361V363M729.5 366V367M730.5 361V363M731.5 366V367M733.5 362V363M734.5 361V363M735.5 367V368M736.5 366V367M737.5 361V363M738.5 366V367M739.5 362V363M739.5 366V367M740.5 366V367M741.5 361V363M742.5 362V363M743.5 366V368M745.5 362V363M746.5 362V363M746.5 366V367M749.5 362V363M750.5 361V363M750.5 366V367M751.5 362V363M751.5 366V367M752.5 362V363M752.5 366V368M754.5 362V363M755.5 366V367M756.5 366V368M758.5 361V363M758.5 366V367M759.5 362V363M759.5 366V367M761.5 366V367M762.5 361V363M762.5 366V367M765.5 362V363M766.5 361V363M766.5 366V367M767.5 366V368M768.5 363V364M770.5 366V367"/>
<path stroke="#009c00" d="M21.5 291V292M22.5 291V292M23.5 293V294M24.5 293V294M27.5 291V292M28.5 293V294M29.5 291V292M29.5 292V293M30.5 292V293M31.5 291V292M33.5 293V294M34.5 293V294M35.5 293V294M36.5 293V294M37.5 291V292M39.5 291V292M39.5 292V293M39.5 293V294M40.5 292V293M43.5 292V293M43.5 293V294M44.5 293V294M45.5 291V292M46.5 291V292M46.5 293V294M49.5 291V292M51.5 292V293M53.5 291V292M55.5 293V294M56.5 293V294M58.5 291V292M58.5 293V294M61.5 291V292M62.5 293V294M63.5 293V294M66.5 293V294M67.5 291V292M68.5 291V292M68.5 293V294M69.5 293V294M70.5 291V292M71.5 292V293M72.5 293V294M75.5 293V294M78.5 293V294M79.5 291V292M79.5 293V294M80.5 291V292M80.5 293V294M82.5 293V294M83.5 291V292M84.5 291V292M85.5 292V293M86.5 293V294M88.5 291V292M89.5 291V292M90.5 291V292M92.5 291V292M92.5 293V294M97.5 291V292M98.5 291V292M99.5 293V294M100.5 292V293M101.5 292V293M102.5 291V292M105.5 293V294M107.5 293V294M108.5 291V292M109.5 291V292M111.5 293V294M112.5 291V292M113.5 291V292M114.5 291V292M115.5 291V292M115.5 293V294M117.5 293V294M118.5 293V294M119.5 293V294M120.5 292V293M121.5 291V292M121.5 293V294M122.5 291V292M123.5 291V292M124.5 291V292M125.5 293V294M126.5 291V292M126.5 293V294M128.5 291V292M130.5 291V292M133.5 293V294M136.5 293V294M137.5 291V292M138.5 292V293M139.5 293V294M141.5 292V293M141.5 293V294M143.5 292V293M143.5 293V294M144.5 291V292M146.5 291V292M148.5 291V292M149.5 291V292M150.5 291V292M150.5 293V294M151.5 291V292M153.5 293V294M155.5 291V292M156.5 291V292M156.5 293V294M158.5 291V292M158.5 293V294M160.5 292V293M160.5 293V294M164.5 291V292M164.5 293V294M165.5 293V294M168.5 293V294M169.5 291V292M174.5 293V294M175.5 292V293M175.5 301V302M176.5 301V302M176.5 310V311M177.5 311V312M177.5 315V316M178.5 320V321M179.5 329V330M181.5 337V338M182.5 341V342M185.5 348V349M186.5 350V351M186.5 354V355M187.5 355V356M189.5 357V358M190.5 358V359M191.5 358V359M192.5 356V357M192.5 359V360M194.5 357V358M194.5 360V361M196.5 358V359M196.5 359V360M197.5 358V359M197.5 361V362M198.5 359V360M199.5 360V361M201.5 359V360M201.5 362V363M202.5 362V363M203.5 362V363M205.5 361V362M206.5 360V361M207.5 360V361M208.5 360V361M209.5 360V361M209.5 363V364M210.5 363V364M211.5 362V363M211.5 363V364M212.5 363V364M213.5 361V362M213.5 363V364M214.5 362V363M215.5 361V362M215.5 362V363M217.5 362V363M218.5 361V362M219.5 361V362M219.5 362V363M220.5 361V362M221.5 361V362M222.5 361V362M223.5 361V362M223.5 364V365M224.5 361V362M224.5 364V365M225.5 361V362M226.5 364V365M227.5 361V362M227.5 364V365M228.5 361V362M228.5 364V365M229.5 362V363M229.5 364V365M230.5 364V365M231.5 364V365M232.5 364V365M233.5 364V365M234.5 364V365M235.5 364V365M236.5 364V365M237.5 364V365M238.5 364V365M239.5 363V364M239.5 364V365M240.5 364V365M241.5 362V363M241.5 363V364M241.5 364V365M242.5 364V365M243.5 364V365M244.5 364V365M247.5 364V365M248.5 362V363M249.5 362V363M249.5 364V365M250.5 362V363M250.5 364V365M251.5 362V363M252.5 364V365M253.5 362V363M254.5 362V363M255.5 362V363M256.5 362V363M257.5 362V363M257.5 363V364M258.5 362V363M258.5 363V364M259.5 362V363M260.5 362V363M261.5 362V363M262.5 362V363M263.5 362V363M264.5 362V363M264.5 364V365M265.5 362V363M266.5 362V363M267.5 362V363M267.5 363V364M268.5 362V363M269.5 362V363M270.5 362V363M271.5 362V363M272.5 362V363M272.5 364V365M273.5 362V363M274.5 362V363M275.5 362V363M275.5 364V365M276.5 362V363M277.5 362V363M277.5 363V364M277.5 364V365M278.5 362V363M279.5 362V363M280.5 365V366M281.5 362V363M282.5 362V363M283.5 362V363M284.5 362V363M285.5 365V366M286.5 362V363M286.5 363V364M287.5 365V366M288.5 362V363M289.5 362V363M290.5 362V363M291.5 365V366M292.5 362V363M292.5 364V365M293.5 365V366M294.5 365V366M295.5 365V366M296.5 365V366M297.5 365V366M298.5 364V365M298.5 365V366M299.5 365V366M300.5 364V365M300.5 365V366M301.5 365V366M302.5 363V364M302.5 365V366M303.5 364V365M303.5 365V366M304.5 364V365M304.5 365V366M305.5 365V366M306.5 365V366M307.5 363V364M307.5 364V365M307.5 365V366M308.5 363V364M308.5 365V366M309.5 365V366M310.5 365V366M311.5 365V366M312.5 365V366M313.5 365V366M314.5 365V366M315.5 363V364M315.5 365V366M316.5 365V366M317.5 365V366M318.5 365V366M319.5 363V364M319.5 364V365M319.5 365V366M320.5 365V366M321.5 365V366M322.5 365V366M323.5 363V364M323.5 365V366M324.5 365V366M325.5 364V365M325.5 365V366M326.5 365V366M327.5 365V366M328.5 363V364M328.5 365V366M329.5 365V366M330.5 365V366M331.5 365V366M332.5 365V366M333.5 365V366M334.5 365V366M335.5 363V364M335.5 365V366M336.5 365V366M337.5 365V366M338.5 365V366M339.5 365V366M340.5 365V366M341.5 365V366M342.5 364V365M342.5 365V366M343.5 365V366M344.5 365V366M345.5 365V366M346.5 365V366M347.5 365V366M348.5 363V364M348.5 364V365M348.5 365V366M349.5 365V366M350.5 365V366M351.5 365V366M353.5 365V366M354.5 365V366M355.5 365V366M357.5 365V366M358.5 363V364M358.5 365V366M359.5 365V366M360.5 364V365M360.5 365V366M361.5 365V366M362.5 363V364M362.5 365V366M364.5 364V365M364.5 365V366M366.5 365V366M368.5 365V366M369.5 364V365M370.5 365V366M371.5 365V366M372.5 363V364M374.5 363V364M375.5 365V366M378.5 365V366M380.5 363V364M382.5 365V366M383.5 363V364M384.5 363V364M387.5 363V364M388.5 364V365M388.5 365V366M389.5 365V366M390.5 365V366M391.5 363V364M392.5 363V364M393.5 363V364M393.5 364V365M394.5 365V366M395.5 363V364M396.5 363V364M398.5 363V364M399.5 363V364M399.5 365V366M400.5 363V364M401.5 363V364M402.5 363V364M404.5 363V364M406.5 363V364M408.5 363V364M408.5 364V365M409.5 363V364M410.5 363V364M411.5 363V364M411.5 364V365M413.5 363V364M414.5 363V364M415.5 363V364M417.5 363V364M419.5 363V364M420.5 363V364M420.5 365V366M421.5 363V364M421.5 364V365M422.5 363V364M422.5 364V365M423.5 363V364M424.5 363V364M425.5 363V364M426.5 363V364M426.5 364V365M427.5 363V364M428.5 363V364M429.5 363V364M430.5 363V364M431.5 363V364M432.5 363V364M433.5 363V364M434.5 363V364M435.5 363V364M435.5 364V365M436.5 363V364M437.5 363V364M437.5 365V366M438.5 363V364M439.5 363V364M440.5 363V364M440.5 364V365M441.5 363V364M441.5 364V365M442.5 363V364M443.5 363V364M444.5 363V364M445.5 363V364M446.5 363V364M446.5 364V365M447.5 363V364M448.5 363V364M449.5 363V364M450.5 363V364M451.5 363V364M452.5 363V364M453.5 363V364M454.5 363V364M454.5 364V365M455.5 363V364M456.5 363V364M457.5 363V364M457.5 365V366M458.5 363V364M459.5 363V364M460.5 363V364M461.5 363V364M462.5 363V364M463.5 363V364M463.5 365V366M464.5 363V364M465.5 363V364M465.5 365V366M466.5 363V364M467.5 363V364M468.5 363V364M469.5 363V364M470.5 363V364M471.5 363V364M472.5 363V364M473.5 363V364M474.5 363V364M474.5 364V365M475.5 363V364M476.5 363V364M477.5 363V364M478.5 363V364M479.5 363V364M480.5 363V364M481.5 363V364M482.5 363V364M483.5 363V364M484.5 363V364M484.5 364V365M485.5 363V364M486.5 363V364M487.5 363V364M488.5 363V364M488.5 364V365M489.5 363V364M490.5 363V364M491.5 363V364M492.5 363V364M493.5 363V364M494.5 363V364M494.5 364V365M495.5 363V364M496.5 363V364M497.5 363V364M497.5 364V365M498.5 363V364M499.5 363V364M499.5 365V366M500.5 363V364M501.5 363V364M502.5 363V364M502.5 364V365M502.5 365V366M503.5 363V364M504.5 363V364M505.5 363V364M506.5 363V364M506.5 365V366M507.5 363V364M508.5 363V364M509.5 363V364M510.5 363V364M510.5 365V366M511.5 363V364M512.5 363V364M512.5 365V366M513.5 363V364M513.5 365V366M514.5 363V364M514.5 364V365M514.5 365V366M515.5 363V364M516.5 363V364M516.5 365V366M517.5 363V364M517.5 364V365M517.5 365V366M518.5 363V364M519.5 363V364M520.5 363V364M521.5 363V364M522.5 363V364M522.5 364V365M523.5 363V364M524.5 363V364M525.5 363V364M526.5 363V364M527.5 363V364M528.5 363V364M529.5 363V364M530.5 363V364M531.5 363V364M532.5 363V364M532.5 364V365M532.5 365V366M533.5 363V364M534.5 363V364M535.5 363V364M535.5 364V365M536.5 363V364M537.5 363V364M538.5 363V364M539.5 363V364M540.5 363V364M541.5 363V364M542.5 363V364M543.5 363V364M543.5 365V366M544.5 363V364M545.5 363V364M546.5 363V364M546.5 364V365M546.5 365V366M547.5 363V364M548.5 363V364M549.5 363V364M549.5 364V365M550.5 363V364M551.5 363V364M552.5 363V364M553.5 363V364M554.5 363V364M554.5 364V365M555.5 363V364M555.5 364V365M556.5 363V364M557.5 363V364M557.5 364V365M558.5 363V364M558.5 364V365M559.5 363V364M560.5 363V364M561.5 363V364M562.5 363V364M563.5 363V364M564.5 363V364M564.5 364V365M565.5 363V364M565.5 364V365M566.5 363V364M567.5 363V364M568.5 363V364M568.5 364V365M569.5 363V364M570.5 363V364M570.5 364V365M571.5 363V364M572.5 363V364M573.5 363V364M574.5 363V364M575.5 363V364M576.5 363V364M577.5 363V364M578.5 363V364M579.5 363V364M580.5 363V364M580.5 364V365M580.5 365V366M581.5 363V364M582.5 363V364M583.5 363V364M584.5 363V364M585.5 363V364M585.5 365V366M586.5 363V364M587.5 363V364M588.5 363V364M589.5 363V364M590.5 363V364M591.5 363V364M592.5 363V364M592.5 364V365M593.5 363V364M594.5 363V364M595.5 366V367M596.5 363V364M596.5 364V365M597.5 363V364M598.5 363V364M598.5 364V365M599.5 363V364M600.5 363V364M601.5 363V364M602.5 363V364M603.5 363V364M604.5 363V364M605.5 363V364M606.5 363V364M606.5 364V365M607.5 363V364M607.5 365V366M608.5 363V364M609.5 363V364M610.5 363V364M611.5 363V364M611.5 365V366M612.5 363V364M613.5 363V364M613.5 365V366M614.5 363V364M615.5 363V364M616.5 363V364M617.5 363V364M617.5 364V365M618.5 363V364M619.5 363V364M620.5 363V364M620.5 365V366M621.5 363V364M621.5 365V366M622.5 363V364M623.5 363V364M624.5 366V367M625.5 363V364M626.5 363V364M626.5 364V365M627.5 366V367M628.5 363V364M629.5 363V364M630.5 363V364M631.5 363V364M632.5 363V364M633.5 363V364M634.5 363V364M635.5 363V364M636.5 363V364M637.5 363V364M637.5 364V365M638.5 363V364M639.5 363V364M640.5 363V364M641.5 363V364M642.5 363V364M643.5 363V364M643.5 364V365M644.5 363V364M644.5 365V366M645.5 364V365M645.5 366V367M646.5 363V364M646.5 364V365M647.5 363V364M648.5 363V364M649.5 363V364M650.5 363V364M650.5 364V365M650.5 365V366M651.5 363V364M652.5 366V367M653.5 363V364M654.5 363V364M655.5 363V364M656.5 363V364M657.5 363V364M658.5 363V364M659.5 363V364M660.5 363V364M660.5 365V366M661.5 363V364M662.5 363V364M663.5 363V364M664.5 363V364M665.5 363V364M666.5 363V364M667.5 363V364M667.5 364V365M668.5 363V364M669.5 363V364M670.5 363V364M670.5 364V365M671.5 363V364M671.5 364V365M672.5 363V364M672.5 365V366M673.5 363V364M674.5 363V364M675.5 363V364M676.5 364V365M676.5 366V367M677.5 363V364M678.5 363V364M679.5 366V367M680.5 363V364M681.5 365V366M681.5 366V367M682.5 363V364M682.5 365V366M683.5 363V364M684.5 363V364M685.5 363V364M686.5 366V367M687.5 363V364M688.5 363V364M689.5 363V364M690.5 363V364M691.5 363V364M692.5 363V364M693.5 363V364M694.5 363V364M695.5 363V364M696.5 363V364M697.5 363V364M697.5 365V366M698.5 365V366M698.5 366V367M699.5 366V367M700.5 363V364M701.5 363V364M701.5 364V365M702.5 363V364M703.5 363V364M704.5 364V365M704.5 365V366M704.5 366V367M705.5 363V364M706.5 363V364M707.5 363V364M708.5 363V364M709.5 363V364M709.5 364V365M709.5 365V366M710.5 363V364M711.5 363V364M712.5 363V364M713.5 363V364M714.5 363V364M715.5 363V364M716.5 363V364M717.5 363V364M717.5 364V365M718.5 363V364M718.5 364V365M719.5 363V364M720.5 363V364M721.5 363V364M722.5 366V367M723.5 363V364M724.5 363V364M725.5 363V364M726.5 366V367M727.5 363V364M728.5 363V364M728.5 364V365M729.5 363V364M730.5 363V364M731.5 363V364M732.5 363V364M733.5 363V364M734.5 363V364M735.5 366V367M736.5 363V364M737.5 363V364M738.5 363V364M739.5 363V364M740.5 363V364M740.5 364V365M741.5 363V364M742.5 363V364M743.5 363V364M744.5 363V364M745.5 363V364M746.5 363V364M747.5 366V367M748.5 363V364M748.5 365V366M749.5 363V364M750.5 363V364M750.5 365V366M751.5 363V364M752.5 363V364M753.5 363V364M754.5 363V364M755.5 363V364M756.5 363V364M757.5 363V364M758.5 363V364M759.5 363V364M759.5 365V366M760.5 364V365M760.5 366V367M761.5 363V364M762.5 363V364M762.5 364V365M763.5 363V364M763.5 365V366M764.5 363V364M765.5 363V364M765.5 365V366M766.5 363V364M767.5 363V364M768.5 366V367M769.5 363V364M770.5 363V364M770.5 364V365"/>
<path stroke="#00e400" d="M21.5 292V293M21.5 293V294M22.5 292V293M22.5 293V294M23.5 291V292M23.5 292V293M24.5 291V292M24.5 292V293M25.5 291V292M25.5 292V293M25.5 293V294M26.5 291V292M26.5 292V293M26.5 293V294M27.5 292V293M27.5 293V294M28.5 291V292M28.5 292V293M29.5 293V294M30.5 291V292M30.5 293V294M31.5 292V293M31.5 293V294M32.5 291V292M32.5 292V293M32.5 293V294M33.5 291V292M33.5 292V293M34.5 291V292M34.5 292V293M35.5 291V292M35.5 292V293M36.5 291V292M36.5 292V293M37.5 292V293M37.5 293V294M38.5 291V292M38.5 292V293M38.5 293V294M40.5 291V292M40.5 293V294M41.5 291V292M41.5 292V293M41.5 293V294M42.5 291V292M42.5 292V293M42.5 293V294M43.5 291V292M44.5 291V292M44.5 292V293M45.5 292V293M45.5 293V294M46.5 292V293M47.5 291V292M47.5 292V293M47.5 293V294M48.5 291V292M48.5 292V293M48.5 293V294M49.5 292V293M49.5 293V294M50.5 291V292M50.5 292V293M50.5 293V294M51.5 291V292M51.5 293V294M52.5 291V292M52.5 292V293M52.5 293V294M53.5 292V293M53.5 293V294M54.5 291V292M54.5 292V293M54.5 293V294M55.5 291V292M55.5 292V293M56.5 291V292M56.5 292V293M57.5 291V292M57.5 292V293M57.5 293V294M58.5 292V293M59.5 291V292M59.5 292V293M59.5 293V294M60.5 291V292M60.5 292V293M60.5 293V294M61.5 292V293M61.5 293V294M62.5 291V292M62.5 292V293M63.5 291V292M63.5 292V293M64.5 291V292M64.5 292V293M64.5 293V294M65.5 291V292M65.5 292V293M65.5 293V294M66.5 291V292M66.5 292V293M67.5 292V293M67.5 293V294M68.5 292V293M69.5 291V292M69.5 292V293M70.5 292V293M70.5 293V294M71.5 291V292M71.5 293V294M72.5 291V292M72.5 292V293M73.5 291V292M73.5 292V293M73.5 293V294M74.5 291V292M74.5 292V293M74.5 293V294M75.5 291V292M75.5 292V293M76.5 291V292M76.5 292V293M76.5 293V294M77.5 291V292M77.5 292V293M77.5 293V294M78.5 291V292M78.5 292V293M79.5 292V293M80.5 292V293M81.5 291V292M81.5 292V293M81.5 293V294M82.5 291V292M82.5 292V293M83.5 292V293M83.5 293V294M84.5 292V293M84.5 293V294M85.5 291V292M85.5 293V294M86.5 291V292M86.5 292V293M87.5 291V292M87.5 292V293M87.5 293V294M88.5 292V293M88.5 293V294M89.5 292V293M89.5 293V294M90.5 292V293M90.5 293V294M91.5 291V292M91.5 292V293M91.5 293V294M92.5 292V293M93.5 291V292M93.5 292V293M93.5 293V294M94.5 291V292M94.5 292V293M94.5 293V294M95.5 291V292M95.5 292V293M95.5 293V294M96.5 291V292M96.5 292V293M96.5 293V294M97.5 292V293M97.5 293V294M98.5 292V293M98.5 293V294M99.5 291V292M99.5 292V293M100.5 291V292M100.5 293V294M101.5 291V292M101.5 293V294M102.5 292V293M102.5 293V294M103.5 291V292M103.5 292V293M103.5 293V294M104.5 291V292M104.5 292V293M104.5 293V294M105.5 291V292M105.5 292V293M106.5 291V292M106.5 292V293M106.5 293V294M107.5 291V292M107.5 292V293M108.5 292V293M108.5 293V294M109.5 292V293M109.5 293V294M110.5 291V292M110.5 292V293M110.5 293V294M111.5 291V292M111.5 292V293M112.5 292V293M112.5 293V294M113.5 292V293M113.5 293V294M114.5 292V293M114.5 293V294M115.5 292V293M116.5 291V292M116.5 292V293M116.5 293V294M117.5 291V292M117.5 292V293M118.5 291V292M118.5 292V293M119.5 291V292M119.5 292V293M120.5 291V292M120.5 293V294M121.5 292V293M122.5 292V293M122.5 293V294M123.5 292V293M123.5 293V294M124.5 292V293M124.5 293V294M125.5 291V292M125.5 292V293M126.5 292V293M127.5 291V292M127.5 292V293M127.5 293V294M128.5 292V293M128.5 293V294M129.5 291V292M129.5 292V293M129.5 293V294M130.5 292V293M130.5 293V294M131.5 291V292M131.5 292V293M131.5 293V294M132.5 291V292M132.5 292V293M132.5 293V294M133.5 291V292M133.5 292V293M134.5 291V292M134.5 292V293M134.5 293V294M135.5 291V292M135.5 292V293M135.5 293V294M136.5 291V292M136.5 292V293M137.5 292V293M137.5 293V294M138.5 291V292M138.5 293V294M139.5 291V292M139.5 292V293M140.5 291V292M140.5 292V293M140.5 293V294M141.5 291V292M142.5 291V292M142.5 292V293M142.5 293V294M143.5 291V292M144.5 292V293M144.5 293V294M145.5 291V292M145.5 292V293M145.5 293V294M146.5 292V293M146.5 293V294M147.5 291V292M147.5 292V293M147.5 293V294M148.5 292V293M148.5 293V294M149.5 292V293M149.5 293V294M150.5 292V293M151.5 292V293M151.5 293V294M152.5 291V292M152.5 292V293M152.5 293V294M153.5 291V292M153.5 292V293M154.5 291V292M154.5 292V293M154.5 293V294M155.5 292V293M155.5 293V294M156.5 292V293M157.5 291V292M157.5 292V293M157.5 293V294M158.5 292V293M159.5 291V292M159.5 292V293M159.5 293V294M160.5 291V292M161.5 291V292M161.5 292V293M161.5 293V294M162.5 291V292M162.5 292V293M162.5 293V294M163.5 291V292M163.5 292V293M163.5 293V294M164.5 292V293M165.5 291V292M165.5 292V293M166.5 291V292M166.5 292V293M166.5 293V294M167.5 291V292M167.5 292V293M167.5 293V294M168.5 291V292M168.5 292V293M169.5 292V293M169.5 293V294M170.5 291V292M170.5 292V293M170.5 293V294M171.5 291V292M171.5 292V293M171.5 293V294M172.5 291V292M172.5 292V293M172.5 293V294M173.5 291V292M173.5 292V293M173.5 293V294M174.5 291V292M174.5 292V293M184.5 346V347M184.5 347V348M184.5 348V349M184.5 349V350M184.5 350V351M185.5 349V350M185.5 350V351M185.5 351V352M185.5 352V353M186.5 351V352M186.5 352V353M186.5 353V354M187.5 352V353M187.5 353V354M187.5 354V355M188.5 353V354M188.5 354V355M188.5 355V356M188.5 356V357M189.5 354V355M189.5 355V356M189.5 356V357M190.5 355V356M190.5 356V357M190.5 357V358M191.5 356V357M191.5 357V358M192.5 357V358M192.5 358V359M193.5 357V358M193.5 358V359M193.5 359V360M194.5 358V359M194.5 359V360M195.5 358V359M195.5 359V360M195.5 360V361M196.5 360V361M197.5 359V360M197.5 360V361M198.5 360V361M198.5 361V362M199.5 359V360M199.5 361V362M200.5 359V360M200.5 360V361M200.5 361V362M201.5 360V361M201.5 361V362M202.5 360V361M202.5 361V362M203.5 360V361M203.5 361V362M204.5 360V361M204.5 361V362M204.5 362V363M205.5 360V361M205.5 362V363M206.5 361V362M206.5 362V363M207.5 361V362M207.5 362V363M208.5 361V362M208.5 362V363M209.5 361V362M209.5 362V363M210.5 361V362M210.5 362V363M211.5 361V362M212.5 361V362M212.5 362V363M213.5 362V363M214.5 361V362M214.5 363V364M215.5 363V364M216.5 361V362M216.5 362V363M216.5 363V364M217.5 361V362M217.5 363V364M218.5 362V363M218.5 363V364M219.5 363V364M220.5 362V363M220.5 363V364M221.5 362V363M221.5 363V364M222.5 362V363M222.5 363V364M223.5 362V363M223.5 363V364M224.5 362V363M224.5 363V364M225.5 362V363M225.5 363V364M226.5 362V363M226.5 363V364M227.5 362V363M227.5 363V364M228.5 362V363M228.5 363V364M229.5 363V364M230.5 362V363M230.5 363V364M231.5 362V363M231.5 363V364M232.5 362V363M232.5 363V364M233.5 362V363M233.5 363V364M234.5 362V363M234.5 363V364M235.5 362V363M235.5 363V364M236.5 362V363M236.5 363V364M237.5 362V363M237.5 363V364M238.5 362V363M238.5 363V364M239.5 362V363M240.5 362V363M240.5 363V364M242.5 362V363M242.5 363V364M243.5 362V363M243.5 363V364M244.5 362V363M244.5 363V364M245.5 362V363M245.5 363V364M245.5 364V365M246.5 362V363M246.5 363V364M246.5 364V365M247.5 362V363M247.5 363V364M248.5 363V364M248.5 364V365M249.5 363V364M250.5 363V364M251.5 363V364M251.5 364V365M252.5 362V363M252.5 363V364M253.5 363V364M253.5 364V365M254.5 363V364M254.5 364V365M255.5 363V364M255.5 364V365M256.5 363V364M256.5 364V365M257.5 364V365M258.5 364V365M259.5 363V364M259.5 364V365M260.5 363V364M260.5 364V365M261.5 363V364M261.5 364V365M262.5 363V364M262.5 364V365M263.5 363V364M263.5 364V365M264.5 363V364M265.5 363V364M265.5 364V365M266.5 363V364M266.5 364V365M267.5 364V365M268.5 363V364M268.5 364V365M269.5 363V364M269.5 364V365M270.5 363V364M270.5 364V365M271.5 363V364M271.5 364V365M272.5 363V364M273.5 363V364M273.5 364V365M274.5 363V364M274.5 364V365M275.5 363V364M276.5 363V364M276.5 364V365M278.5 363V364M278.5 364V365M279.5 363V364M279.5 364V365M280.5 363V364M280.5 364V365M281.5 363V364M281.5 364V365M282.5 363V364M282.5 364V365M283.5 363V364M283.5 364V365M284.5 363V364M284.5 364V365M285.5 363V364M285.5 364V365M286.5 364V365M287.5 363V364M287.5 364V365M288.5 363V364M288.5 364V365M289.5 363V364M289.5 364V365M290.5 363V364M290.5 364V365M291.5 363V364M291.5 364V365M292.5 363V364M293.5 363V364M293.5 364V365M294.5 363V364M294.5 364V365M295.5 363V364M295.5 364V365M296.5 363V364M296.5 364V365M297.5 363V364M297.5 364V365M298.5 363V364M299.5 363V364M299.5 364V365M300.5 363V364M301.5 363V364M301.5 364V365M302.5 364V365M303.5 363V364M304.5 363V364M305.5 363V364M305.5 364V365M306.5 363V364M306.5 364V365M308.5 364V365M309.5 363V364M309.5 364V365M310.5 363V364M310.5 364V365M311.5 363V364M311.5 364V365M312.5 363V364M312.5 364V365M313.5 363V364M313.5 364V365M314.5 363V364M314.5 364V365M315.5 364V365M316.5 363V364M316.5 364V365M317.5 363V364M317.5 364V365M318.5 363V364M318.5 364V365M320.5 363V364M320.5 364V365M321.5 363V364M321.5 364V365M322.5 363V364M322.5 364V365M323.5 364V365M324.5 363V364M324.5 364V365M325.5 363V364M326.5 363V364M326.5 364V365M327.5 363V364M327.5 364V365M328.5 364V365M329.5 363V364M329.5 364V365M330.5 363V364M330.5 364V365M331.5 363V364M331.5 364V365M332.5 363V364M332.5 364V365M333.5 363V364M333.5 364V365M334.5 363V364M334.5 364V365M335.5 364V365M336.5 363V364M336.5 364V365M337.5 363V364M337.5 364V365M338.5 363V364M338.5 364V365M339.5 363V364M339.5 364V365M340.5 363V364M340.5 364V365M341.5 363V364M341.5 364V365M342.5 363V364M343.5 363V364M343.5 364V365M344.5 363V364M344.5 364V365M345.5 363V364M345.5 364V365M346.5 363V364M346.5 364V365M347.5 363V364M347.5 364V365M349.5 363V364M349.5 364V365M350.5 363V364M350.5 364V365M351.5 363V364M351.5 364V365M352.5 363V364M352.5 364V365M352.5 365V366M353.5 363V364M353.5 364V365M354.5 363V364M354.5 364V365M355.5 363V364M355.5 364V365M356.5 363V364M356.5 364V365M356.5 365V366M357.5 363V364M357.5 364V365M358.5 364V365M359.5 363V364M359.5 364V365M360.5 363V364M361.5 363V364M361.5 364V365M362.5 364V365M363.5 363V364M363.5 364V365M363.5 365V366M364.5 363V364M365.5 363V364M365.5 364V365M365.5 365V366M366.5 363V364M366.5 364V365M367.5 363V364M367.5 364V365M367.5 365V366M368.5 363V364M368.5 364V365M369.5 363V364M369.5 365V366M370.5 363V364M370.5 364V365M371.5 363V364M371.5 364V365M372.5 364V365M372.5 365V366M373.5 363V364M373.5 364V365M373.5 365V366M374.5 364V365M374.5 365V366M375.5 363V364M375.5 364V365M376.5 363V364M376.5 364V365M376.5 365V366M377.5 363V364M377.5 364V365M377.5 365V366M378.5 363V364M378.5 364V365M379.5 363V364M379.5 364V365M379.5 365V366M380.5 364V365M380.5 365V366M381.5 363V364M381.5 364V365M381.5 365V366M382.5 363V364M382.5 364V365M383.5 364V365M383.5 365V366M384.5 364V365M384.5 365V366M385.5 363V364M385.5 364V365M385.5 365V366M386.5 363V364M386.5 364V365M386.5 365V366M387.5 364V365M387.5 365V366M388.5 363V364M389.5 363V364M389.5 364V365M390.5 363V364M390.5 364V365M391.5 364V365M391.5 365V366M392.5 364V365M392.5 365V366M393.5 365V366M394.5 363V364M394.5 364V365M395.5 364V365M395.5 365V366M396.5 364V365M396.5 365V366M397.5 363V364M397.5 364V365M397.5 365V366M398.5 364V365M398.5 365V366M399.5 364V365M400.5 364V365M400.5 365V366M401.5 364V365M401.5 365V366M402.5 364V365M402.5 365V366M403.5 363V364M403.5 364V365M403.5 365V366M404.5 364V365M404.5 365V366M405.5 363V364M405.5 364V365M405.5 365V366M406.5 364V365M406.5 365V366M407.5 363V364M407.5 364V365M407.5 365V366M408.5 365V366M409.5 364V365M409.5 365V366M410.5 364V365M410.5 365V366M411.5 365V366M412.5 363V364M412.5 364V365M412.5 365V366M413.5 364V365M413.5 365V366M414.5 364V365M414.5 365V366M415.5 364V365M415.5 365V366M416.5 363V364M416.5 364V365M416.5 365V366M417.5 364V365M417.5 365V366M418.5 363V364M418.5 364V365M418.5 365V366M419.5 364V365M419.5 365V366M420.5 364V365M421.5 365V366M422.5 365V366M423.5 364V365M423.5 365V366M424.5 364V365M424.5 365V366M425.5 364V365M425.5 365V366M426.5 365V366M427.5 364V365M427.5 365V366M428.5 364V365M428.5 365V366M429.5 364V365M429.5 365V366M430.5 364V365M430.5 365V366M431.5 364V365M431.5 365V366M432.5 364V365M432.5 365V366M433.5 364V365M433.5 365V366M434.5 364V365M434.5 365V366M435.5 365V366M436.5 364V365M436.5 365V366M437.5 364V365M438.5 364V365M438.5 365V366M439.5 364V365M439.5 365V366M440.5 365V366M441.5 365V366M442.5 364V365M442.5 365V366M443.5 364V365M443.5 365V366M444.5 364V365M444.5 365V366M445.5 364V365M445.5 365V366M446.5 365V366M447.5 364V365M447.5 365V366M448.5 364V365M448.5 365V366M449.5 364V365M449.5 365V366M450.5 364V365M450.5 365V366M451.5 364V365M451.5 365V366M452.5 364V365M452.5 365V366M453.5 364V365M453.5 365V366M454.5 365V366M455.5 364V365M455.5 365V366M456.5 364V365M456.5 365V366M457.5 364V365M458.5 364V365M458.5 365V366M459.5 364V365M459.5 365V366M460.5 364V365M460.5 365V366M461.5 364V365M461.5 365V366M462.5 364V365M462.5 365V366M463.5 364V365M464.5 364V365M464.5 365V366M465.5 364V365M466.5 364V365M466.5 365V366M467.5 364V365M467.5 365V366M468.5 364V365M468.5 365V366M469.5 364V365M469.5 365V366M470.5 364V365M470.5 365V366M471.5 364V365M471.5 365V366M472.5 364V365M472.5 365V366M473.5 364V365M473.5 365V366M474.5 365V366M475.5 364V365M475.5 365V366M476.5 364V365M476.5 365V366M477.5 364V365M477.5 365V366M478.5 364V365M478.5 365V366M479.5 364V365M479.5 365V366M480.5 364V365M480.5 365V366M481.5 364V365M481.5 365V366M482.5 364V365M482.5 365V366M483.5 364V365M483.5 365V366M484.5 365V366M485.5 364V365M485.5 365V366M486.5 364V365M486.5 365V366M487.5 364V365M487.5 365V366M488.5 365V366M489.5 364V365M489.5 365V366M490.5 364V365M490.5 365V366M491.5 364V365M491.5 365V366M492.5 364V365M492.5 365V366M493.5 364V365M493.5 365V366M494.5 365V366M495.5 364V365M495.5 365V366M496.5 364V365M496.5 365V366M497.5 365V366M498.5 364V365M498.5 365V366M499.5 364V365M500.5 364V365M500.5 365V366M501.5 364V365M501.5 365V366M503.5 364V365M503.5 365V366M504.5 364V365M504.5 365V366M505.5 364V365M505.5 365V366M506.5 364V365M507.5 364V365M507.5 365V366M508.5 364V365M508.5 365V366M509.5 364V365M509.5 365V366M510.5 364V365M511.5 364V365M511.5 365V366M512.5 364V365M513.5 364V365M515.5 364V365M515.5 365V366M516.5 364V365M518.5 364V365M518.5 365V366M519.5 364V365M519.5 365V366M520.5 364V365M520.5 365V366M521.5 364V365M521.5 365V366M522.5 365V366M523.5 364V365M523.5 365V366M524.5 364V365M524.5 365V366M525.5 364V365M525.5 365V366M526.5 364V365M526.5 365V366M527.5 364V365M527.5 365V366M528.5 364V365M528.5 365V366M529.5 364V365M529.5 365V366M530.5 364V365M530.5 365V366M531.5 364V365M531.5 365V366M533.5 364V365M533.5 365V366M534.5 364V365M534.5 365V366M535.5 365V366M536.5 364V365M536.5 365V366M537.5 364V365M537.5 365V366M538.5 364V365M538.5 365V366M539.5 364V365M539.5 365V366M540.5 364V365M540.5 365V366M541.5 364V365M541.5 365V366M542.5 364V365M542.5 365V366M543.5 364V365M544.5 364V365M544.5 365V366M545.5 364V365M545.5 365V366M547.5 364V365M547.5 365V366M548.5 364V365M548.5 365V366M549.5 365V366M550.5 364V365M550.5 365V366M551.5 364V365M551.5 365V366M552.5 364V365M552.5 365V366M553.5 364V365M553.5 365V366M554.5 365V366M555.5 365V366M556.5 364V365M556.5 365V366M557.5 365V366M558.5 365V366M559.5 364V365M559.5 365V366M560.5 364V365M560.5 365V366M561.5 364V365M561.5 365V366M562.5 364V365M562.5 365V366M563.5 364V365M563.5 365V366M564.5 365V366M565.5 365V366M566.5 364V365M566.5 365V366M567.5 364V365M567.5 365V366M568.5 365V366M569.5 364V365M569.5 365V366M570.5 365V366M571.5 364V365M571.5 365V366M572.5 364V365M572.5 365V366M573.5 364V365M573.5 365V366M574.5 364V365M574.5 365V366M575.5 364V365M575.5 365V366M576.5 364V365M576.5 365V366M577.5 364V365M577.5 365V366M578.5 364V365M578.5 365V366M579.5 364V365M579.5 365V366M581.5 364V365M581.5 365V366M582.5 364V365M582.5 365V366M583.5 364V365M583.5 365V366M584.5 364V365M584.5 365V366M585.5 364V365M586.5 364V365M586.5 365V366M587.5 364V365M587.5 365V366M588.5 364V365M588.5 365V366M589.5 364V365M589.5 365V366M590.5 364V365M590.5 365V366M591.5 364V365M591.5 365V366M592.5 365V366M593.5 364V365M593.5 365V366M594.5 364V365M594.5 365V366M595.5 364V365M595.5 365V366M596.5 365V366M597.5 364V365M597.5 365V366M598.5 365V366M599.5 364V365M599.5 365V366M600.5 364V365M600.5 365V366M601.5 364V365M601.5 365V366M602.5 364V365M602.5 365V366M603.5 364V365M603.5 365V366M604.5 364V365M604.5 365V366M605.5 364V365M605.5 365V366M606.5 365V366M607.5 364V365M608.5 364V365M608.5 365V366M609.5 364V365M609.5 365V366M610.5 364V365M610.5 365V366M611.5 364V365M612.5 364V365M612.5 365V366M613.5 364V365M614.5 364V365M614.5 365V366M615.5 364V365M615.5 365V366M616.5 364V365M616.5 365V366M617.5 365V366M618.5 364V365M618.5 365V366M619.5 364V365M619.5 365V366M620.5 364V365M621.5 364V365M622.5 364V365M622.5 365V366M623.5 364V365M623.5 365V366M624.5 364V365M624.5 365V366M625.5 364V365M625.5 365V366M626.5 365V366M627.5 364V365M627.5 365V366M628.5 364V365M628.5 365V366M629.5 364V365M629.5 365V366M630.5 364V365M630.5 365V366M631.5 364V365M631.5 365V366M632.5 364V365M632.5 365V366M633.5 364V365M633.5 365V366M634.5 364V365M634.5 365V366M635.5 364V365M635.5 365V366M636.5 364V365M636.5 365V366M637.5 365V366M638.5 364V365M638.5 365V366M639.5 364V365M639.5 365V366M640.5 364V365M640.5 365V366M641.5 364V365M641.5 365V366M642.5 364V365M642.5 365V366M643.5 365V366M644.5 364V365M645.5 365V366M646.5 365V366M647.5 364V365M647.5 365V366M648.5 364V365M648.5 365V366M649.5 364V365M649.5 365V366M651.5 364V365M651.5 365V366M652.5 364V365M652.5 365V366M653.5 364V365M653.5 365V366M654.5 364V365M654.5 365V366M655.5 364V365M655.5 365V366M656.5 364V365M656.5 365V366M657.5 364V365M657.5 365V366M658.5 364V365M658.5 365V366M659.5 364V365M659.5 365V366M660.5 364V365M661.5 364V365M661.5 365V366M662.5 364V365M662.5 365V366M663.5 364V365M663.5 365V366M664.5 364V365M664.5 365V366M665.5 364V365M665.5 365V366M666.5 364V365M666.5 365V366M667.5 365V366M668.5 364V365M668.5 365V366M669.5 364V365M669.5 365V366M670.5 365V366M671.5 365V366M672.5 364V365M673.5 364V365M673.5 365V366M674.5 364V365M674.5 365V366M675.5 364V365M675.5 365V366M676.5 365V366M677.5 364V365M677.5 365V366M678.5 364V365M678.5 365V366M679.5 364V365M679.5 365V366M680.5 364V365M680.5 365V366M681.5 364V365M682.5 364V365M683.5 364V365M683.5 365V366M684.5 364V365M684.5 365V366M685.5 364V365M685.5 365V366M686.5 364V365M686.5 365V366M687.5 364V365M687.5 365V366M688.5 364V365M688.5 365V366M689.5 364V365M689.5 365V366M690.5 364V365M690.5 365V366M691.5 364V365M691.5 365V366M692.5 364V365M692.5 365V366M693.5 364V365M693.5 365V366M694.5 364V365M694.5 365V366M695.5 364V365M695.5 365V366M696.5 364V365M696.5 365V366M697.5 364V365M698.5 364V365M699.5 364V365M699.5 365V366M700.5 364V365M700.5 365V366M701.5 365V366M702.5 364V365M702.5 365V366M703.5 364V365M703.5 365V366M705.5 364V365M705.5 365V366M706.5 364V365M706.5 365V366M707.5 364V365M707.5 365V366M708.5 364V365M708.5 365V366M710.5 364V365M710.5 365V366M711.5 364V365M711.5 365V366M712.5 364V365M712.5 365V366M713.5 364V365M713.5 365V366M714.5 364V365M714.5 365V366M715.5 364V365M715.5 365V366M716.5 364V365M716.5 365V366M717.5 365V366M718.5 365V366M719.5 364V365M719.5 365V366M720.5 364V365M720.5 365V366M721.5 364V365M721.5 365V366M722.5 364V365M722.5 365V366M723.5 364V365M723.5 365V366M724.5 364V365M724.5 365V366M725.5 364V365M725.5 365V366M726.5 364V365M726.5 365V366M727.5 364V365M727.5 365V366M728.5 365V366M729.5 364V365M729.5 365V366M730.5 364V365M730.5 365V366M731.5 364V365M731.5 365V366M732.5 364V365M732.5 365V366M733.5 364V365M733.5 365V366M734.5 364V365M734.5 365V366M735.5 364V365M735.5 365V366M736.5 364V365M736.5 365V366M737.5 364V365M737.5 365V366M738.5 364V365M738.5 365V366M739.5 364V365M739.5 365V366M740.5 365V366M741.5 364V365M741.5 365V366M742.5 364V365M742.5 365V366M743.5 364V365M743.5 365V366M744.5 364V365M744.5 365V366M745.5 364V365M745.5 365V366M746.5 364V365M746.5 365V366M747.5 364V365M747.5 365V366M748.5 364V365M749.5 364V365M749.5 365V366M750.5 364V365M751.5 364V365M751.5 365V366M752.5 364V365M752.5 365V366M753.5 364V365M753.5 365V366M754.5 364V365M754.5 365V366M755.5 364V365M755.5 365V366M756.5 364V365M756.5 365V366M757.5 364V365M757.5 365V366M758.5 364V365M758.5 365V366M759.5 364V365M760.5 365V366M761.5 364V365M761.5 365V366M762.5 365V366M763.5 364V365M764.5 364V365M764.5 365V366M765.5 364V365M766.5 364V365M766.5 365V366M767.5 364V365M767.5 365V366M768.5 364V365M768.5 365V366M769.5 364V365M769.5 365V366M770.5 365V366"/>
</g>
<g shape-rendering="crispEdges" fill="none" stroke="#aa9a76" stroke-width="1">
<path d="M21 67.5H771" stroke-dasharray="1 14"/>
<path d="M22 67.5H27M765 67.5H770" stroke-dasharray="1 1"/>
<path d="M21 117.5H771" stroke-dasharray="1 14"/>
<path d="M22 117.5H27M765 117.5H770" stroke-dasharray="1 1"/>
<path d="M21 167.5H771" stroke-dasharray="1 14"/>
<path d="M22 167.5H27M765 167.5H770" stroke-dasharray="1 1"/>
<path d="M21 267.5H771" stroke-dasharray="1 14"/>
<path d="M22 267.5H27M765 267.5H770" stroke-dasharray="1 1"/>
<path d="M21 317.5H771" stroke-dasharray="1 14"/>
<path d="M22 317.5H27M765 317.5H770" stroke-dasharray="1 1"/>
<path d="M21 367.5H771" stroke-dasharray="1 14"/>
<path d="M22 367.5H27M765 367.5H770" stroke-dasharray="1 1"/>
<path d="M96.5 27V408" stroke-dasharray="1 9"/>
<path d="M96.5 18V23M96.5 412V417" stroke-dasharray="1 1"/>
<path d="M171.5 27V408" stroke-dasharray="1 9"/>
<path d="M171.5 18V23M171.5 412V417" stroke-dasharray="1 1"/>
<path d="M246.5 27V408" stroke-dasharray="1 9"/>
<path d="M246.5 18V23M246.5 412V417" stroke-dasharray="1 1"/>
<path d="M321.5 27V408" stroke-dasharray="1 9"/>
<path d="M321.5 18V23M321.5 412V417" stroke-dasharray="1 1"/>
<path d="M471.5 27V408" stroke-dasharray="1 9"/>
<path d="M471.5 18V23M471.5 412V417" stroke-dasharray="1 1"/>
<path d="M546.5 27V408" stroke-dasharray="1 9"/>
<path d="M546.5 18V23M546.5 412V417" stroke-dasharray="1 1"/>
<path d="M621.5 27V408" stroke-dasharray="1 9"/>
<path d="M621.5 18V23M621.5 412V417" stroke-dasharray="1 1"/>
<path d="M696.5 27V408" stroke-dasharray="1 9"/>
<path d="M696.5 18V23M696.5 412V417" stroke-dasharray="1 1"/>
<path d="M36.5 17V20M36.5 415V418M51.5 17V20M51.5 415V418M66.5 17V20M66.5 415V418M81.5 17V20M81.5 415V418M111.5 17V20M111.5 415V418M126.5 17V20M126.5 415V418M141.5 17V20M141.5 415V418M156.5 17V20M156.5 415V418M186.5 17V20M186.5 415V418M201.5 17V20M201.5 415V418M216.5 17V20M216.5 415V418M231.5 17V20M231.5 415V418M261.5 17V20M261.5 415V418M276.5 17V20M276.5 415V418M291.5 17V20M291.5 415V418M306.5 17V20M306.5 415V418M336.5 17V20M336.5 415V418M351.5 17V20M351.5 415V418M366.5 17V20M366.5 415V418M381.5 17V20M381.5 415V418M411.5 17V20M411.5 415V418M426.5 17V20M426.5 415V418M441.5 17V20M441.5 415V418M456.5 17V20M456.5 415V418M486.5 17V20M486.5 415V418M501.5 17V20M501.5 415V418M516.5 17V20M516.5 415V418M531.5 17V20M531.5 415V418M561.5 17V20M561.5 415V418M576.5 17V20M576.5 415V418M591.5 17V20M591.5 415V418M606.5 17V20M606.5 415V418M636.5 17V20M636.5 415V418M651.5 17V20M651.5 415V418M666.5 17V20M666.5 415V418M681.5 17V20M681.5 415V418M711.5 17V20M711.5 415V418M726.5 17V20M726.5 415V418M741.5 17V20M741.5 415V418M756.5 17V20M756.5 415V418" stroke-dasharray="1 1"/>
<path d="M21 27.5H24M768 27.5H771M21 37.5H24M768 37.5H771M21 47.5H24M768 47.5H771M21 57.5H24M768 57.5H771M21 77.5H24M768 77.5H771M21 87.5H24M768 87.5H771M21 97.5H24M768 97.5H771M21 107.5H24M768 107.5H771M21 127.5H24M768 127.5H771M21 137.5H24M768 137.5H771M21 147.5H24M768 147.5H771M21 157.5H24M768 157.5H771M21 177.5H24M768 177.5H771M21 187.5H24M768 187.5H771M21 197.5H24M768 197.5H771M21 207.5H24M768 207.5H771M21 227.5H24M768 227.5H771M21 237.5H24M768 237.5H771M21 247.5H24M768 247.5H771M21 257.5H24M768 257.5H771M21 277.5H24M768 277.5H771M21 287.5H24M768 287.5H771M21 297.5H24M768 297.5H771M21 307.5H24M768 307.5H771M21 327.5H24M768 327.5H771M21 337.5H24M768 337.5H771M21 347.5H24M768 347.5H771M21 357.5H24M768 357.5H771M21 377.5H24M768 377.5H771M21 387.5H24M768 387.5H771M21 397.5H24M768 397.5H771M21 407.5H24M768 407.5H771" stroke-dasharray="1 1"/>
<path d="M21 217.5H771M396.5 23V418"/>
<path d="M36.5 214V221M51.5 214V221M66.5 214V221M81.5 214V221M96.5 211V224M111.5 214V221M126.5 214V221M141.5 214V221M156.5 214V221M171.5 211V224M186.5 214V221M201.5 214V221M216.5 214V221M231.5 214V221M246.5 211V224M261.5 214V221M276.5 214V221M291.5 214V221M306.5 214V221M321.5 211V224M336.5 214V221M351.5 214V221M366.5 214V221M381.5 214V221M411.5 214V221M426.5 214V221M441.5 214V221M456.5 214V221M471.5 211V224M486.5 214V221M501.5 214V221M516.5 214V221M531.5 214V221M546.5 211V224M561.5 214V221M576.5 214V221M591.5 214V221M606.5 214V221M621.5 211V224M636.5 214V221M651.5 214V221M666.5 214V221M681.5 214V221M696.5 211V224M711.5 214V221M726.5 214V221M741.5 214V221M756.5 214V221" stroke-dasharray="1 1"/>
<path d="M393 27.5H400M393 37.5H400M393 47.5H400M393 57.5H400M390 67.5H403M393 77.5H400M393 87.5H400M393 97.5H400M393 107.5H400M390 117.5H403M393 127.5H400M393 137.5H400M393 147.5H400M393 157.5H400M390 167.5H403M393 177.5H400M393 187.5H400M393 197.5H400M393 207.5H400M393 227.5H400M393 237.5H400M393 247.5H400M393 257.5H400M390 267.5H403M393 277.5H400M393 287.5H400M393 297.5H400M393 307.5H400M390 317.5H403M393 327.5H400M393 337.5H400M393 347.5H400M393 357.5H400M390 367.5H403M393 377.5H400M393 387.5H400M393 397.5H400M393 407.5H400" stroke-dasharray="1 1"/>
</g>
<g shape-rendering="crispEdges">
<!-- record view bar -->
<rect x="121.5" y="0.5" width="549" height="15" fill="#030603" stroke="#5898d8"/>
<path d="M20.5 419V16.5H771.5V419M20 418.5H772" fill="none" stroke="#5898d8"/>
<path d="M121 15.5H671" fill="none" stroke="#5898d8"/>
<path d="M231 1h2v14h-2zM233 1h1v2h-1zM233 13h1v2h-1zM561 1h2v14h-2zM560 1h1v2h-1zM560 13h1v2h-1z" fill="#b0a078"/>
<path d="M233 7.5H561" stroke="#00a000" fill="none"/>
</g>
<!-- top triangles -->
<path d="M392.5 1H400.5L396.5 5.5Z" fill="#ffa000"/>
<path d="M390.5 17H402.5L396.5 23.5Z" fill="#ffa000"/>
<!-- small T in record view -->
<g>
<rect x="297" y="5" width="8" height="11" rx="1.5" fill="#ffa000"/>
<text x="301" y="15" text-anchor="middle" style="font-size:11px;font-weight:bold;fill:#000">T</text>
</g>
<!-- trigger position T marker -->
<g>
<path d="M174 24H184L185 25V36H184V37H182V38H180V39H178V38H176V37H174V36H173V25Z" fill="#ffa000" shape-rendering="crispEdges"/>
<text x="179" y="35.800" text-anchor="middle" style="font-size:15px;font-weight:bold;fill:#000">T</text>
</g>
<!-- header text -->
<text x="0" y="14.5" style="font-family:'Liberation Serif',serif;font-weight:bold;font-size:20px;letter-spacing:-0.8px;stroke:#f0f0ff;stroke-width:0.350px" textLength="31.500" lengthAdjust="spacingAndGlyphs">Tek</text>
<text class="t" x="34.5" y="13" textLength="30" lengthAdjust="spacingAndGlyphs">Stop</text>
<!-- channel markers -->
<g>
<path d="M0.5 209.5H13.5L20 217.5L13.5 225.5H0.5Z" fill="#000" stroke="#00e0e0" stroke-width="1.5"/>
<text x="7.5" y="222.700" text-anchor="middle" style="fill:#00e0e0;font-size:14.500px;font-weight:bold">2</text>
<rect x="22" y="209" width="36" height="16" fill="#000"/>
<text class="m" x="22.500" y="222.300" textLength="33.500" lengthAdjust="spacingAndGlyphs" style="font-size:16.5px">VOUT</text>
</g>
<g>
<path d="M0 359H13.5L20.5 367.5L13.5 376H0Z" fill="#00b400"/>
<text x="7.5" y="373.5" text-anchor="middle" style="fill:#000;font-size:16px;font-weight:bold">4</text>
<rect x="22" y="359" width="36" height="16" fill="#000"/>
<text class="m" x="22.500" y="372" textLength="33.500" lengthAdjust="spacingAndGlyphs" style="font-size:16.5px">IOUT</text>
</g>
<!-- trigger level arrow -->
<path d="M760 317.5L766.5 311.5V317H771V318H766.5V323.5Z" fill="#00a000"/>
<!-- bottom panels -->
<g fill="#020502" stroke="#f0f0ff" stroke-width="1">
<rect x="20.5" y="420.5" width="321" height="38" rx="5.5"/>
<rect x="345.5" y="420.5" width="338" height="38" rx="5.5"/>
<rect x="686.5" y="420.5" width="111" height="38" rx="5.5"/>
</g>
<!-- panel 1 -->
<rect x="186" y="423" width="25.500" height="16" rx="8" fill="#00e4e4"/>
<text x="198.700" y="436.400" text-anchor="middle" style="fill:#000;font-size:16px;font-weight:bold">2</text>
<rect x="186" y="441" width="25.500" height="16" rx="8" fill="#00a800"/>
<text x="198.700" y="454.400" text-anchor="middle" style="fill:#000;font-size:16px;font-weight:bold">4</text>
<text class="t" x="227" y="436" style="fill:#00e0e0" textLength="48" lengthAdjust="spacingAndGlyphs">20.0mV</text>
<text class="t" x="227" y="454" style="fill:#00b000" textLength="43" lengthAdjust="spacingAndGlyphs">2.00 A</text>
<path d="M291 431C292 424 295 424 296 430S299.500 437 301 429.500" fill="none" stroke="#00e0e0" stroke-width="1.2"/>
<text x="303.500" y="432" style="fill:#00e0e0;font-size:9.500px" textLength="5" lengthAdjust="spacingAndGlyphs">B</text>
<text x="307.800" y="436" style="fill:#00e0e0;font-size:9.500px" textLength="6" lengthAdjust="spacingAndGlyphs">W</text>
<text class="t" x="291" y="454" style="fill:#00b000;font-size:14px" textLength="10.500" lengthAdjust="spacingAndGlyphs">Ω</text>
<!-- panel 2 -->
<text class="t" x="350" y="436" textLength="37" lengthAdjust="spacingAndGlyphs">100µs</text>
<rect x="349" y="443" width="12" height="12" rx="2" fill="#ffa000"/>
<text x="355" y="453.800" text-anchor="middle" style="fill:#000;font-size:14px;font-weight:bold">T</text>
<path d="M362 448.500H370.500M367 445.300L370.700 448.500L367 451.700" fill="none" stroke="#ffa000" stroke-width="1.700"/>
<path d="M372 445.500H383.500L377.750 451.500Z" fill="#ffa000"/>
<text class="t" x="383" y="454" style="fill:#ffa000" textLength="75" lengthAdjust="spacingAndGlyphs">290.0000µs</text>
<text class="t" x="483.700" y="436" textLength="63" lengthAdjust="spacingAndGlyphs">10.0MS/s</text>
<text class="t" x="483.700" y="454" textLength="67" lengthAdjust="spacingAndGlyphs">10k points</text>
<rect x="597" y="423" width="25.500" height="16" rx="8" fill="#00a800"/>
<text x="609.700" y="436.400" text-anchor="middle" style="fill:#000;font-size:16px;font-weight:bold">4</text>
<path d="M631 424.500H634.500L639 435.500H642.500" fill="none" stroke="#f0f0ff" stroke-width="1.1"/>
<text class="t" x="603" y="454" textLength="42.500" lengthAdjust="spacingAndGlyphs">2.00 A</text>
<!-- panel 3 -->
<text class="t" x="712" y="436" textLength="80" lengthAdjust="spacingAndGlyphs" xml:space="preserve" style="white-space:pre">14 May  2025</text>
<text class="t" x="712" y="454" textLength="56.500" lengthAdjust="spacingAndGlyphs">14:47:35</text>
</svg>
</body></html>
